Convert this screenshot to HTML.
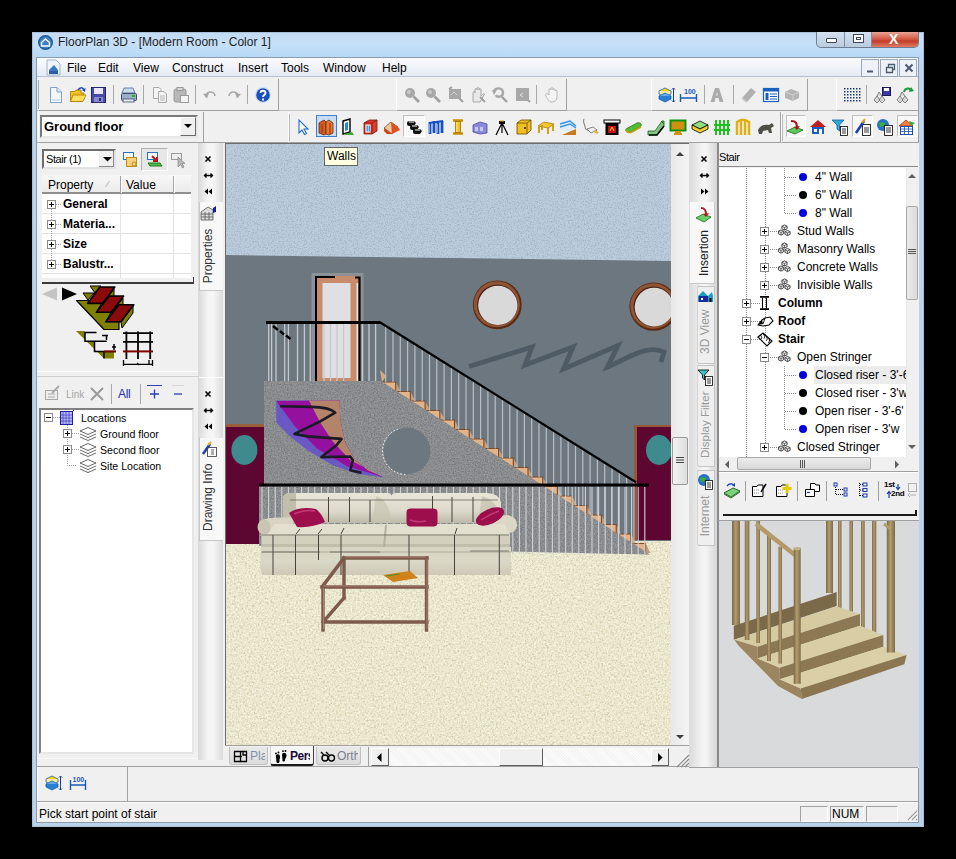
<!DOCTYPE html>
<html><head><meta charset="utf-8">
<style>
*{margin:0;padding:0;box-sizing:border-box}
body{width:956px;height:859px;background:#000;position:relative;overflow:hidden;font-family:"Liberation Sans",sans-serif;font-size:12px;color:#000}
.a{position:absolute}
.t{position:absolute;white-space:nowrap;line-height:14px}
svg{position:absolute;overflow:visible}
</style></head><body>

<!-- WINDOW FRAME -->
<div class="a" style="left:32px;top:32px;width:892px;height:795px;background:linear-gradient(180deg,#c2daf2 0px,#c6e0f8 12px,#b8d8f6 25px,#bcd6f0 40px,#bad2ec 100%);box-shadow:inset 0 0 0 1px #a9c0d8"></div>
<!-- title icon -->
<svg style="left:37px;top:34px" width="17" height="17" viewBox="0 0 17 17"><circle cx="8.5" cy="8.5" r="7.5" fill="#1f5d9a"/><circle cx="8.5" cy="8.5" r="6" fill="#3b7fc2"/><path d="M4.5 8.5 L8.5 5 L12.5 8.5 V12 H4.5Z" fill="none" stroke="#fff" stroke-width="1.4"/></svg>
<div class="t" style="left:58px;top:35px;font-size:12px;color:#1e1e1e">FloorPlan 3D - [Modern Room - Color 1]</div>
<!-- caption buttons -->
<div class="a" style="left:816px;top:32px;width:103px;height:16px;border:1px solid #6d7f95;border-top:none;border-radius:0 0 5px 5px;overflow:hidden;background:linear-gradient(#d4e0ee,#bccbdd)">
  <div class="a" style="left:0;top:0;width:28px;height:15px;border-right:1px solid #7b8ea5"></div>
  <div class="a" style="left:28px;top:0;width:27px;height:15px;border-right:1px solid #7b8ea5"></div>
  <div class="a" style="left:55px;top:0;width:48px;height:15px;background:linear-gradient(#e9a594,#d2533f 50%,#c23c27 60%,#e07c64)"></div>
  <div class="a" style="left:9px;top:6px;width:11px;height:5px;border:1px solid #3a4a5e;background:#fff;border-radius:1px"></div>
  <div class="a" style="left:36px;top:2px;width:11px;height:9px;border:1px solid #3a4a5e;background:#fff"><div class="a" style="left:2px;top:2px;width:5px;height:3px;border:1px solid #3a4a5e"></div></div>
  <div class="t" style="left:72px;top:0px;font-size:14px;font-weight:bold;color:#fff;line-height:14px">X</div>
</div>

<!-- CLIENT AREA -->
<div class="a" style="left:36px;top:57px;width:883px;height:766px;background:#f0f0f0;border:1px solid #8d9aaa"></div>

<!-- MENU BAR -->
<div class="a" style="left:37px;top:58px;width:881px;height:19px;background:linear-gradient(#fbfcfe,#e6eaf4);border-bottom:1px solid #b9c0cf"></div>
<svg style="left:46px;top:59px" width="16" height="17" viewBox="0 0 16 17"><path d="M1 1H10L14 5V16H1Z" fill="#eef4fb" stroke="#9fb4cc"/><path d="M3 11L8 6L12 11V15H3Z" fill="#3a78c4"/><rect x="3" y="12" width="9" height="3" fill="#2a5fa5"/></svg>
<div class="t" style="left:67px;top:61px">File</div>
<div class="t" style="left:98px;top:61px">Edit</div>
<div class="t" style="left:133px;top:61px">View</div>
<div class="t" style="left:172px;top:61px">Construct</div>
<div class="t" style="left:238px;top:61px">Insert</div>
<div class="t" style="left:281px;top:61px">Tools</div>
<div class="t" style="left:323px;top:61px">Window</div>
<div class="t" style="left:382px;top:61px">Help</div>
<!-- MDI buttons -->
<div class="a" style="left:861px;top:59px;width:18px;height:18px;border:1px solid #9aa7b8;background:#eef1f7"></div>
<div class="a" style="left:880px;top:59px;width:18px;height:18px;border:1px solid #9aa7b8;background:#eef1f7"></div>
<div class="a" style="left:899px;top:59px;width:18px;height:18px;border:1px solid #9aa7b8;background:#eef1f7"></div>
<svg style="left:861px;top:59px" width="57" height="18"><path d="M6 12.5 H12" stroke="#4a5a70" stroke-width="2"/><path d="M25.5 8.5 H31.5 V13.5 H25.5Z M27.5 8 V5.5 H33.5 V10.5 H32" fill="none" stroke="#4a5a70" stroke-width="1.3"/><path d="M44.5 5.5 L51.5 12.5 M51.5 5.5 L44.5 12.5" stroke="#4a5a70" stroke-width="2"/></svg>

<!-- TOOLBAR ROW 1 BG -->
<div class="a" style="left:37px;top:78px;width:881px;height:33px;background:#f0f0f0;border-bottom:1px solid #c8c8c8"></div>
<!-- ROW 2 BG -->
<div class="a" style="left:37px;top:111px;width:881px;height:32px;background:#f0f0f0;border-bottom:1px solid #a0a0a0"></div>

<!--TB-->
<div class="a" style="left:38px;top:79px;width:241px;height:32px;border-left:1px solid #fff;border-right:1px solid #a0a0a0;border-bottom:1px solid #a0a0a0"></div>
<div class="a" style="left:396px;top:79px;width:171px;height:32px;border-left:1px solid #fff;border-right:1px solid #a0a0a0;border-bottom:1px solid #a0a0a0"></div>
<div class="a" style="left:651px;top:79px;width:157px;height:32px;border-left:1px solid #fff;border-right:1px solid #a0a0a0;border-bottom:1px solid #a0a0a0"></div>
<div class="a" style="left:836px;top:79px;width:83px;height:32px;border-left:1px solid #fff;border-right:1px solid #a0a0a0;border-bottom:1px solid #a0a0a0"></div>
<div class="a" style="left:38px;top:80px;width:1px;height:29px;background:#a8a8a8"></div>
<svg style="left:47.0px;top:85.5px" width="18" height="18" viewBox="0 0 18 18"><path d="M3.5 1.5 H10 L14.5 6 V16.5 H3.5Z" fill="#f4f8fc" stroke="#7aa0cc"/><path d="M10 1.5 V6 H14.5" fill="#dfe9f5" stroke="#7aa0cc"/><path d="M5 14 H13" stroke="#b8cce6"/></svg>
<svg style="left:68.5px;top:85.5px" width="18" height="18" viewBox="0 0 18 18"><path d="M1.5 5.5 H6 L7 4 H12 V7 H15 L13 15.5 H1.5Z" fill="#f0c020" stroke="#a87a00" stroke-width="0.8"/><path d="M4 9 H17 L14 15.5 H1.5Z" fill="#ffe060" stroke="#a87a00" stroke-width="0.8"/><path d="M9 4 C11 1 14 1 15 4" stroke="#1a4ab8" stroke-width="1.5" fill="none"/><path d="M13 4 L16 6 L16.5 2Z" fill="#1a4ab8"/></svg>
<svg style="left:90.0px;top:85.5px" width="18" height="18" viewBox="0 0 18 18"><rect x="1.5" y="1.5" width="14" height="15" fill="#4a4aa8" stroke="#26266a"/><rect x="4" y="2" width="9" height="6" fill="#e8e8f8"/><rect x="4" y="11" width="9" height="5" fill="#8a8ad0"/><rect x="9" y="12" width="2" height="3" fill="#26266a"/></svg>
<div class="a" style="left:113px;top:85px;width:1px;height:19px;background:#a8a8a8"></div>
<svg style="left:119.5px;top:85.5px" width="18" height="18" viewBox="0 0 18 18"><path d="M4 2 H13 L15 7 H2Z" fill="#c8dcf0" stroke="#4a6a90" stroke-width="0.8"/><rect x="1.5" y="7.5" width="15" height="7" rx="1" fill="#9ab0c8" stroke="#3a4a6a"/><rect x="3" y="13" width="11" height="3" fill="#e8eef4" stroke="#3a4a6a" stroke-width="0.8"/><rect x="12" y="9" width="3" height="2" fill="#2ab02a"/></svg>
<div class="a" style="left:143px;top:85px;width:1px;height:19px;background:#a8a8a8"></div>
<svg style="left:150.5px;top:85.5px" width="18" height="18" viewBox="0 0 18 18"><path d="M2.5 1.5 H8 L10 3.5 V12.5 H2.5Z" fill="#f4f4f4" stroke="#a8a8a8"/><path d="M7.5 5.5 H13 L15.5 8 V16.5 H7.5Z" fill="#f4f4f4" stroke="#a8a8a8"/><path d="M9 10H14M9 12H14M9 14H14" stroke="#b8b8b8"/></svg>
<svg style="left:172.0px;top:85.5px" width="18" height="18" viewBox="0 0 18 18"><rect x="2" y="3" width="12" height="13" rx="2" fill="#b8b8b8" stroke="#9a9a9a"/><rect x="5" y="1.5" width="6" height="3" fill="#d8d8d8" stroke="#9a9a9a"/><rect x="8.5" y="9.5" width="8" height="7" fill="#f4f4f4" stroke="#9a9a9a"/></svg>
<div class="a" style="left:195px;top:85px;width:1px;height:19px;background:#a8a8a8"></div>
<svg style="left:202.0px;top:85.5px" width="18" height="18" viewBox="0 0 18 18"><path d="M4 11 C3 5 13 4 13 10" stroke="#a8a8a8" stroke-width="1.6" fill="none"/><path d="M1 8 L5 12.5 L7 7Z" fill="#a8a8a8"/></svg>
<svg style="left:224.0px;top:85.5px" width="18" height="18" viewBox="0 0 18 18"><path d="M14 11 C15 5 5 4 5 10" stroke="#a8a8a8" stroke-width="1.6" fill="none"/><path d="M17 8 L13 12.5 L11 7Z" fill="#a8a8a8"/></svg>
<div class="a" style="left:247px;top:85px;width:1px;height:19px;background:#a8a8a8"></div>
<svg style="left:254.0px;top:85.5px" width="18" height="18" viewBox="0 0 18 18"><circle cx="9" cy="9" r="8" fill="#cfe0f8"/><circle cx="9" cy="9" r="6.8" fill="#1a50c0"/><path d="M6.5 7 C6.5 4 11.5 4 11.5 7 C11.5 9 9 9 9 11" stroke="#fff" stroke-width="1.8" fill="none"/><rect x="8" y="12.5" width="2" height="2" fill="#fff"/></svg>
<svg style="left:402.7px;top:85.5px" width="18" height="18" viewBox="0 0 18 18"><circle cx="7" cy="7" r="5" fill="#a8a8a8"/><path d="M10.5 10.5 L16 16" stroke="#a0a0a0" stroke-width="2.6"/><circle cx="6" cy="6" r="2" fill="#c8c8c8"/></svg>
<svg style="left:424.3px;top:85.5px" width="18" height="18" viewBox="0 0 18 18"><circle cx="7" cy="7" r="5" fill="#a8a8a8"/><path d="M10.5 10.5 L16 16" stroke="#a0a0a0" stroke-width="2.6"/><circle cx="6" cy="6" r="2" fill="#c8c8c8"/></svg>
<svg style="left:446.6px;top:85.5px" width="18" height="18" viewBox="0 0 18 18"><rect x="2" y="3" width="12" height="10" fill="#a8a8a8"/><path d="M2 3 L5 1 M12 12 L16 16" stroke="#a0a0a0" stroke-width="2"/><path d="M4 9 L7 6 L10 9" stroke="#d0d0d0" fill="none"/></svg>
<svg style="left:468.5px;top:85.5px" width="18" height="18" viewBox="0 0 18 18"><path d="M4 16 V7 C4 5 6 5 6 7 V4 C6 2 8 2 8 4 V3 C8 1 10 1 10 3 V4 C10 2 12 2 12 4 V10 L14 8 C15 7 16 8 15 9 L11 16Z" fill="#e8e8e8" stroke="#a8a8a8"/><path d="M11 11 L16 16" stroke="#a0a0a0" stroke-width="2"/></svg>
<svg style="left:491.0px;top:85.5px" width="18" height="18" viewBox="0 0 18 18"><path d="M3 6 C3 1 12 1 12 7 C12 11 6 12 5 9" stroke="#a8a8a8" stroke-width="2.4" fill="none"/><path d="M1 4 L6 4 L3 9Z" fill="#a8a8a8"/><path d="M11 11 L16 16" stroke="#a0a0a0" stroke-width="2.4"/></svg>
<svg style="left:513.7px;top:85.5px" width="18" height="18" viewBox="0 0 18 18"><rect x="2" y="2" width="13" height="13" fill="#a8a8a8"/><path d="M9 7 L6 9 L9 11" stroke="#e0e0e0" fill="none"/><path d="M14 14 L16 16" stroke="#a0a0a0" stroke-width="2"/></svg>
<div class="a" style="left:536px;top:85px;width:1px;height:19px;background:#a8a8a8"></div>
<svg style="left:543.0px;top:85.5px" width="18" height="18" viewBox="0 0 18 18"><path d="M3 10 C2 7 4 7 5 8 L6 9 V4 C6 2 8 2 8 4 V3 C8 1 10 1 10 3 V4 C10 2 12 2 12 4 V5 C12 4 14 4 14 5 V11 C14 14 12 16 9 16 C6 16 5 14 3 10Z" fill="#f4f4f4" stroke="#b8b8b8"/></svg>
<svg style="left:657.0px;top:85.5px" width="19" height="18" viewBox="0 0 19 18"><path d="M2 5 L8 2 L14 5 L8 8Z" fill="#f8d800" stroke="#1a5ab8" stroke-width="0.8"/><path d="M2 5 V8 L8 11 L14 8 V5" fill="#ffe8a0" stroke="#1a5ab8" stroke-width="0.8"/><path d="M2 10 L8 7 L14 10 L8 13Z" fill="#60b0f0" stroke="#1a5ab8" stroke-width="0.8"/><path d="M2 10 V13 L8 16 L14 13 V10" fill="#2a80d0" stroke="#1a5ab8" stroke-width="0.8"/><path d="M16.5 2 V16 M15 3.5 L16.5 2 L18 3.5 M15 14.5 L16.5 16 L18 14.5" stroke="#1a3a90" fill="none"/></svg>
<svg style="left:679.3px;top:85.5px" width="19" height="18" viewBox="0 0 19 18"><path d="M1.5 8 V16 M17.5 8 V16 M1.5 12 H17.5" stroke="#1a5ab8" stroke-width="1.4"/><text x="5" y="8" font-size="7" font-weight="bold" fill="#1a5ab8" font-family="Liberation Sans">100</text></svg>
<div class="a" style="left:704px;top:85px;width:1px;height:19px;background:#a8a8a8"></div>
<svg style="left:708.0px;top:85.5px" width="18" height="18" viewBox="0 0 18 18"><path d="M2.5 16 L7 2 H11 L15.5 16 H11.5 L10.5 12 H7.5 L6.5 16Z M8.2 9.5 H9.8 L9 6Z" fill="#ababab" fill-rule="evenodd"/></svg>
<div class="a" style="left:733px;top:85px;width:1px;height:19px;background:#a8a8a8"></div>
<svg style="left:739.5px;top:85.5px" width="18" height="18" viewBox="0 0 18 18"><path d="M2 12 L11 2 L16 6 L7 16Z" fill="#b0b0b0"/><path d="M2 12 L7 16" stroke="#c8c8c8" stroke-width="2"/></svg>
<svg style="left:762.4px;top:85.5px" width="18" height="18" viewBox="0 0 18 18"><rect x="1.5" y="2.5" width="15" height="13" fill="#fff" stroke="#1a60c0" stroke-width="1.2"/><rect x="1.5" y="2.5" width="15" height="3" fill="#1a60c0"/><rect x="3.5" y="7" width="3" height="7" fill="#1a60c0"/><path d="M8 8H15M8 10.5H15M8 13H15" stroke="#1a60c0" stroke-width="1.2"/></svg>
<svg style="left:783.0px;top:85.5px" width="18" height="18" viewBox="0 0 18 18"><path d="M2 6 L8 3 L16 6 L16 12 L10 15 L2 12Z" fill="#b4b4b4"/><path d="M2 6 L10 9 L16 6 M10 9 V15" stroke="#d0d0d0" fill="none"/></svg>
<svg style="left:842.5px;top:85.5px" width="18" height="18" viewBox="0 0 18 18"><rect x="1" y="2" width="1.5" height="1.5" fill="#1a3a80"/><rect x="1" y="5" width="1.5" height="1.5" fill="#1a3a80"/><rect x="1" y="8" width="1.5" height="1.5" fill="#1a3a80"/><rect x="1" y="11" width="1.5" height="1.5" fill="#1a3a80"/><rect x="1" y="14" width="1.5" height="1.5" fill="#1a3a80"/><rect x="4" y="2" width="1.5" height="1.5" fill="#1a3a80"/><rect x="4" y="5" width="1.5" height="1.5" fill="#1a3a80"/><rect x="4" y="8" width="1.5" height="1.5" fill="#1a3a80"/><rect x="4" y="11" width="1.5" height="1.5" fill="#1a3a80"/><rect x="4" y="14" width="1.5" height="1.5" fill="#1a3a80"/><rect x="7" y="2" width="1.5" height="1.5" fill="#1a3a80"/><rect x="7" y="5" width="1.5" height="1.5" fill="#1a3a80"/><rect x="7" y="8" width="1.5" height="1.5" fill="#1a3a80"/><rect x="7" y="11" width="1.5" height="1.5" fill="#1a3a80"/><rect x="7" y="14" width="1.5" height="1.5" fill="#1a3a80"/><rect x="10" y="2" width="1.5" height="1.5" fill="#1a3a80"/><rect x="10" y="5" width="1.5" height="1.5" fill="#1a3a80"/><rect x="10" y="8" width="1.5" height="1.5" fill="#1a3a80"/><rect x="10" y="11" width="1.5" height="1.5" fill="#1a3a80"/><rect x="10" y="14" width="1.5" height="1.5" fill="#1a3a80"/><rect x="13" y="2" width="1.5" height="1.5" fill="#1a3a80"/><rect x="13" y="5" width="1.5" height="1.5" fill="#1a3a80"/><rect x="13" y="8" width="1.5" height="1.5" fill="#1a3a80"/><rect x="13" y="11" width="1.5" height="1.5" fill="#1a3a80"/><rect x="13" y="14" width="1.5" height="1.5" fill="#1a3a80"/><rect x="16" y="2" width="1.5" height="1.5" fill="#1a3a80"/><rect x="16" y="5" width="1.5" height="1.5" fill="#1a3a80"/><rect x="16" y="8" width="1.5" height="1.5" fill="#1a3a80"/><rect x="16" y="11" width="1.5" height="1.5" fill="#1a3a80"/><rect x="16" y="14" width="1.5" height="1.5" fill="#1a3a80"/></svg>
<div class="a" style="left:866px;top:85px;width:1px;height:19px;background:#a8a8a8"></div>
<svg style="left:872.8px;top:85.5px" width="19" height="18" viewBox="0 0 19 18"><path d="M1 14 L4 10 L7 14 L4 17Z M6 14 L9 10 L12 14 L9 17Z" fill="#d8d8d8" stroke="#6a6a6a" stroke-width="0.8"/><path d="M4 10 L6 6 L9 10" fill="#d8d8d8" stroke="#6a6a6a" stroke-width="0.8"/><rect x="9.5" y="1.5" width="8" height="8" fill="#3a3aa8" stroke="#1a1a5a"/><rect x="11" y="2" width="5" height="3" fill="#fff"/></svg>
<svg style="left:895.5px;top:85.5px" width="19" height="18" viewBox="0 0 19 18"><path d="M1 14 L4 10 L7 14 L4 17Z M6 14 L9 10 L12 14 L9 17Z" fill="#d8d8d8" stroke="#6a6a6a" stroke-width="0.8"/><path d="M4 10 L6 6 L9 10" fill="#d8d8d8" stroke="#6a6a6a" stroke-width="0.8"/><path d="M8 6 C9 2 14 1 15 5" stroke="#1a9a3a" stroke-width="2" fill="none"/><path d="M13 6 L18 5 L15 1Z" fill="#1a9a3a"/></svg>
<div class="a" style="left:38px;top:112px;width:166px;height:31px;border-left:1px solid #fff;border-right:1px solid #a0a0a0;border-bottom:1px solid #a0a0a0"></div>
<div class="a" style="left:288px;top:112px;width:493px;height:31px;border-left:1px solid #fff;border-right:1px solid #a0a0a0;border-bottom:1px solid #a0a0a0"></div>
<div class="a" style="left:781px;top:112px;width:138px;height:31px;border-left:1px solid #fff;border-right:1px solid #a0a0a0;border-bottom:1px solid #a0a0a0"></div>
<div class="a" style="left:316px;top:115px;width:21px;height:22px;background:#c8dcf2;border:1px solid #3d7fd0"></div>
<div class="a" style="left:403px;top:115px;width:22px;height:22px;background:#f8f8f8;border:1px solid;border-color:#c0c0c0 #fff #fff #c0c0c0"></div>
<div class="a" style="left:786px;top:115px;width:20px;height:22px;background:#f8f8f8;border:1px solid;border-color:#c0c0c0 #fff #fff #c0c0c0"></div>
<div class="a" style="left:897px;top:115px;width:21px;height:22px;background:#f8f8f8;border:1px solid;border-color:#c0c0c0 #fff #fff #c0c0c0"></div>
<div class="a" style="left:852px;top:115px;width:21px;height:22px;background:#f8f8f8;border:1px solid;border-color:#c0c0c0 #fff #fff #c0c0c0"></div>
<div class="a" style="left:289px;top:114px;width:1px;height:27px;background:#b8b8b8"></div>
<svg style="left:294.4px;top:117.5px" width="18" height="18" viewBox="0 0 18 18"><path d="M5 2 V15 L8 12 L10.5 16.5 L12.5 15.5 L10 11 L14 11Z" fill="#fff" stroke="#1a70d0" stroke-width="1.1"/></svg>
<svg style="left:317.0px;top:117.5px" width="18" height="18" viewBox="0 0 18 18"><path d="M2 5 L7 2 L9 4 L9 16 L7 17 L2 15Z" fill="#d85a20" stroke="#6a2a10" stroke-width="0.8"/><path d="M9 4 L12 2 L16 5 V15 L12 17 L9 16Z" fill="#e87a30" stroke="#6a2a10" stroke-width="0.8"/><path d="M5 6 V15 M13 5 V16" stroke="#a03a10" stroke-width="1.2"/></svg>
<svg style="left:339.0px;top:117.5px" width="18" height="18" viewBox="0 0 18 18"><path d="M4 3 L11 1 V14 L4 16Z" fill="#fff" stroke="#000" stroke-width="1.4"/><path d="M6 5 L9 4 V12 L6 13Z" fill="#1a90d0"/><path d="M5 16 L13 14 L15 17 L7 17Z" fill="#30b030"/></svg>
<svg style="left:361.0px;top:117.5px" width="18" height="18" viewBox="0 0 18 18"><path d="M3 5 L8 2 H16 V13 L11 16 H3Z" fill="#e03a2a" stroke="#7a1a10" stroke-width="0.8"/><path d="M3 5 H11 V16 M11 5 L16 2" stroke="#7a1a10" fill="none" stroke-width="0.8"/><rect x="4.5" y="6.5" width="5" height="8" fill="#fff"/><rect x="5.5" y="7.5" width="1.5" height="6" fill="#3aa0e0"/><rect x="7.5" y="7.5" width="1.5" height="6" fill="#3aa0e0"/></svg>
<svg style="left:383.0px;top:117.5px" width="18" height="18" viewBox="0 0 18 18"><path d="M1 10 L8 4 L15 9 L9 16Z" fill="#e8c8a0" stroke="#8a4a20" stroke-width="0.8"/><path d="M1 10 L9 16 L4 16 L1 13Z" fill="#d04010"/><path d="M8 4 L15 9 L17 12 L9 16" fill="#e05020"/></svg>
<svg style="left:405.0px;top:117.5px" width="18" height="18" viewBox="0 0 18 18"><path d="M2 5 Q2 3 5 3 H9 L11 5 L9 8 H4 Q2 8 2 6Z" fill="#111"/><path d="M4 4 H9" stroke="#fff" stroke-width="1"/><path d="M5 9 Q5 7 8 7 H12 L14 9 L12 12 H7 Q5 12 5 10Z" fill="#111"/><path d="M7 8 H12" stroke="#fff" stroke-width="1"/><path d="M8 13 Q8 11 11 11 H15 L17 13 L15 16 H10 Q8 16 8 14Z" fill="#111"/><path d="M10 12 H15" stroke="#fff" stroke-width="1"/></svg>
<svg style="left:427.0px;top:117.5px" width="18" height="18" viewBox="0 0 18 18"><path d="M3 4 V16 M7 3 V15 M11 4 V16 M15 3 V15" stroke="#1a50c0" stroke-width="2.8" fill="none"/><path d="M2 5 L16 3" stroke="#1a50c0" stroke-width="2.2"/><path d="M2.5 6 V15 M10.5 6 V15" stroke="#7ab0f0" stroke-width="0.8"/></svg>
<svg style="left:449.0px;top:117.5px" width="18" height="18" viewBox="0 0 18 18"><path d="M4 2.5 H14 M4 15.5 H14" stroke="#c89000" stroke-width="2.6"/><rect x="6.5" y="3.5" width="5" height="11" fill="#f0c020" stroke="#a07000" stroke-width="0.8"/><path d="M8 4 V14" stroke="#fff0a0" stroke-width="1"/></svg>
<svg style="left:471.0px;top:117.5px" width="18" height="18" viewBox="0 0 18 18"><path d="M2 7 L9 4 L16 6 V15 L9 16 L2 14Z" fill="#8a8ad8" stroke="#4a4aa0" stroke-width="0.8"/><rect x="4" y="9" width="3" height="4" fill="#c8c8f8"/><rect x="9" y="9" width="3" height="4" fill="#c8c8f8"/></svg>
<svg style="left:493.0px;top:117.5px" width="18" height="18" viewBox="0 0 18 18"><path d="M9 5 L3 17 M9 5 L15 17 M9 5 V15" stroke="#000" stroke-width="1.2"/><path d="M6 3 H12 V6 H6Z" fill="#000"/><path d="M7 3 L11 3" stroke="#d0a020" stroke-width="1"/></svg>
<svg style="left:515.0px;top:117.5px" width="18" height="18" viewBox="0 0 18 18"><path d="M2 5 L6 2 H16 V12 L12 16 H2Z" fill="#f0c020" stroke="#6a4a00" stroke-width="0.8"/><path d="M2 5 H12 V16 M12 5 L16 2" stroke="#6a4a00" fill="none" stroke-width="0.8"/><rect x="9" y="9" width="2" height="2" fill="#6a4a00"/></svg>
<svg style="left:537.0px;top:117.5px" width="18" height="18" viewBox="0 0 18 18"><path d="M1 8 L7 4 L17 6 L11 10Z" fill="#f8c830" stroke="#a87800" stroke-width="0.8"/><path d="M2 9 V15 M11 10 V16 M16 7 V13 M5 7 V12" stroke="#d09800" stroke-width="1.8"/></svg>
<svg style="left:559.0px;top:117.5px" width="18" height="18" viewBox="0 0 18 18"><path d="M1 12 V4 L11 1 L17 6 V14 Z" fill="#dfeefa"/><path d="M1 6 L11 3 L17 8 M1 9 L11 6 L17 10" stroke="#3a90e0" stroke-width="1.4" fill="none"/><path d="M3 17 L17 11 V17Z" fill="#c87820"/></svg>
<svg style="left:581.0px;top:117.5px" width="18" height="18" viewBox="0 0 18 18"><path d="M3 1 C1 4 4 6 4 9 C4 12 8 13 10 12" stroke="#8a8a8a" stroke-width="1.2" fill="none"/><path d="M6 11 L12 9 L16 12 L10 15Z" fill="#f0f0f0" stroke="#6a6a6a" stroke-width="0.8"/><path d="M13 13 L17 15" stroke="#e0b040" stroke-width="2"/></svg>
<svg style="left:603.0px;top:117.5px" width="18" height="18" viewBox="0 0 18 18"><rect x="1" y="2" width="16" height="3" fill="#fff" stroke="#000"/><rect x="2.5" y="5" width="13" height="12" fill="#000"/><rect x="5" y="8" width="8" height="7" fill="#c01010"/><path d="M7 13 L9 9 L11 13" stroke="#f8c020" fill="none"/></svg>
<svg style="left:625.0px;top:117.5px" width="18" height="18" viewBox="0 0 18 18"><path d="M1 11 L12 5 C15 4 17 6 16 8 L6 14 C3 15 0 14 1 11Z" fill="#50c030" stroke="#2a7010" stroke-width="0.8"/><path d="M1 12 C2 15 5 15 7 14 L16 9" stroke="#c8a020" stroke-width="1.5" fill="none"/></svg>
<svg style="left:647.0px;top:117.5px" width="18" height="18" viewBox="0 0 18 18"><path d="M1 13 L8 13 L15 3 H17 V8 L10 17 H1Z" fill="#80c880" stroke="#206020" stroke-width="0.8"/><path d="M2 17 L10 17 L17 8" stroke="#000" stroke-width="1.6" fill="none"/><path d="M14 3 L17 6" stroke="#206020"/></svg>
<svg style="left:669.0px;top:117.5px" width="18" height="18" viewBox="0 0 18 18"><rect x="1.5" y="2.5" width="15" height="10" fill="#d09010" stroke="#109010" stroke-width="2"/><rect x="6" y="13" width="6" height="2" fill="#d09010"/><rect x="5" y="15" width="8" height="2" fill="#d09010"/></svg>
<svg style="left:691.0px;top:117.5px" width="18" height="18" viewBox="0 0 18 18"><path d="M1 7 L9 3 L17 7 L9 11Z" fill="#90e080" stroke="#000" stroke-width="0.8"/><path d="M1 7 V11 L9 15 L17 11 V7 L9 11Z" fill="#f0d030" stroke="#000" stroke-width="0.8"/></svg>
<svg style="left:713.0px;top:117.5px" width="18" height="18" viewBox="0 0 18 18"><path d="M3 2 V17 M7 2 V17 M11 2 V17 M15 2 V17 M1 7 H17 M1 12 H17" stroke="#20c020" stroke-width="2"/></svg>
<svg style="left:735.0px;top:117.5px" width="18" height="18" viewBox="0 0 18 18"><path d="M2 3 V17 M6 2 V17 M10 2 V17 M14 3 V17 M2 4 C6 1 10 1 14 4" stroke="#e0b010" stroke-width="2.4" fill="none"/></svg>
<svg style="left:757.0px;top:117.5px" width="18" height="18" viewBox="0 0 18 18"><path d="M1 12 C3 7 8 6 12 7 L15 5 L17 8 L14 10 L15 15 H12 L11 12 L6 13 L5 16 H2Z" fill="#505048"/></svg>
<div class="a" style="left:782px;top:114px;width:1px;height:27px;background:#b8b8b8"></div>
<svg style="left:786.0px;top:117.5px" width="18" height="18" viewBox="0 0 18 18"><path d="M1 13 L9 9 L17 12 L9 16Z" fill="#60c860" stroke="#1a6a1a" stroke-width="0.8"/><path d="M5 3 C10 3 11 5 11 10" stroke="#b01010" stroke-width="2.2" fill="none"/><path d="M8 9 L11 12 L14 8Z" fill="#b01010"/></svg>
<svg style="left:809.0px;top:117.5px" width="18" height="18" viewBox="0 0 18 18"><path d="M1 9 L9 2 L17 9 Z" fill="#c02020"/><rect x="3" y="9" width="12" height="7" fill="#1a60c0"/><rect x="5" y="11" width="3" height="3" fill="#fff"/><rect x="10" y="11" width="3" height="5" fill="#fff"/></svg>
<svg style="left:831.0px;top:117.5px" width="18" height="18" viewBox="0 0 18 18"><path d="M1 2 H13 L8.5 7 V13 L6 11 V7Z" fill="#30a8e0" stroke="#1a5a90" stroke-width="0.8"/><rect x="9.5" y="8.5" width="7" height="9" fill="#fff" stroke="#000" stroke-width="0.8"/><path d="M11 11H15M11 13H15M11 15H15" stroke="#000" stroke-width="0.8"/></svg>
<svg style="left:853.7px;top:117.5px" width="18" height="18" viewBox="0 0 18 18"><rect x="8.5" y="6.5" width="8" height="11" fill="#fff" stroke="#000" stroke-width="0.8"/><path d="M10 10H15M10 12H15M10 14H15" stroke="#000" stroke-width="0.8"/><path d="M2 15 L10 3" stroke="#1a40b0" stroke-width="2.6"/><path d="M8 5 L11 1" stroke="#e0a020" stroke-width="2"/></svg>
<svg style="left:876.0px;top:117.5px" width="18" height="18" viewBox="0 0 18 18"><circle cx="7" cy="7" r="6" fill="#2a70c8"/><path d="M3 5 C5 3 7 6 9 4 C10 7 6 9 4 9Z" fill="#3ab03a"/><rect x="8.5" y="7.5" width="8" height="10" fill="#fff" stroke="#000" stroke-width="0.8"/><path d="M10 10H15M10 12H15M10 14H15" stroke="#000" stroke-width="0.8"/></svg>
<svg style="left:897.5px;top:117.5px" width="18" height="18" viewBox="0 0 18 18"><path d="M1 8 L8 2 L15 8Z" fill="#f08040" stroke="#a03010" stroke-width="0.8"/><rect x="2.5" y="8.5" width="12" height="8" fill="#fff" stroke="#1a50b0"/><path d="M2.5 11 H14.5 M2.5 13.5 H14.5 M6.5 8.5 V16.5 M10.5 8.5 V16.5" stroke="#1a50b0" stroke-width="0.8"/><path d="M11 3 L17 5 L13 8" fill="#30b040"/></svg>
<!--/TB-->
<!-- combo ground floor -->
<div class="a" style="left:40px;top:115px;width:158px;height:23px;background:#fff;border:2px solid;border-color:#7a7a7a #e8e8e8 #e8e8e8 #7a7a7a"></div>
<div class="t" style="left:44px;top:119px;font-size:13px;font-weight:bold;line-height:16px">Ground floor</div>
<div class="a" style="left:180px;top:117px;width:16px;height:19px;background:#f0f0f0;border:1px solid;border-color:#fff #6b6b6b #6b6b6b #fff"></div>
<svg style="left:184px;top:124px" width="8" height="5"><path d="M0 0H8L4 4Z" fill="#000"/></svg>

<!-- LEFT PANEL -->
<div class="a" style="left:37px;top:143px;width:161px;height:617px;background:#f0f0f0"></div>
<!-- stair combo -->
<div class="a" style="left:42px;top:149px;width:74px;height:20px;background:#fff;border:2px solid;border-color:#6d6d6d #e3e3e3 #e3e3e3 #6d6d6d"></div>
<div class="a" style="left:99px;top:151px;width:15px;height:16px;background:#f0f0f0;border-right:1px solid #8a8a8a;border-bottom:1px solid #8a8a8a"></div>
<svg style="left:103px;top:157px" width="9" height="5"><path d="M0 0H9L4.5 4.5Z" fill="#000"/></svg>
<div class="t" style="left:46px;top:152px;font-size:11px;letter-spacing:-0.45px">Stair (1)</div>
<!-- 3 small icons -->
<svg style="left:122px;top:151px" width="17" height="17" viewBox="0 0 17 17"><rect x="1.5" y="1.5" width="10" height="7" fill="#fff" stroke="#2a6fc0"/><rect x="4.5" y="6.5" width="10" height="9" fill="#f6d27a" stroke="#c08a20"/><circle cx="12" cy="13" r="2" fill="none" stroke="#c08a20"/></svg>
<div class="a" style="left:141px;top:148px;width:27px;height:23px;background:#e7e7e7;border:1px solid;border-color:#b0b0b0 #fff #fff #b0b0b0"></div>
<svg style="left:146px;top:151px" width="17" height="17" viewBox="0 0 17 17"><rect x="1.5" y="1.5" width="10" height="7" fill="#fff" stroke="#2a6fc0"/><path d="M2 12 L14 12 L16 15 L4 15Z" fill="#4dbb4d" stroke="#1e7a1e"/><path d="M6 5 L11 10 M11 6 V10 H7" stroke="#b01a1a" stroke-width="2" fill="none"/></svg>
<svg style="left:170px;top:151px" width="17" height="17" viewBox="0 0 17 17"><rect x="1.5" y="2.5" width="10" height="6" fill="#eee" stroke="#9a9a9a"/><path d="M8 6 L8 16 L10.5 13.5 L12.5 17 L14 16 L12 12.5 L15 12.5Z" fill="#b8b8b8" stroke="#8a8a8a" stroke-width="0.8"/></svg>
<!-- property grid -->
<div class="a" style="left:42px;top:175px;width:149px;height:19px;background:linear-gradient(#f7f7f7,#ececec);border-bottom:2px solid #8e8e8e"></div>
<div class="a" style="left:120px;top:176px;width:2px;height:17px;background:#a5a5a5;border-right:1px solid #fff"></div>
<div class="a" style="left:173px;top:176px;width:2px;height:17px;background:#a5a5a5;border-right:1px solid #fff"></div>
<div class="t" style="left:48px;top:178px">Property</div>
<div class="t" style="left:107px;top:177px;font-size:9px;color:#9a9a9a">&#8260;</div>
<div class="t" style="left:126px;top:178px">Value</div>
<div class="a" style="left:42px;top:194px;width:149px;height:84px;background:#fff"></div>
<div class="a" style="left:42px;top:213px;width:149px;height:1px;background:#e3e3e3"></div>
<div class="a" style="left:42px;top:233px;width:149px;height:1px;background:#e3e3e3"></div>
<div class="a" style="left:42px;top:253px;width:149px;height:1px;background:#e3e3e3"></div>
<div class="a" style="left:42px;top:273px;width:149px;height:1px;background:#e3e3e3"></div>
<div class="a" style="left:120px;top:194px;width:1px;height:84px;background:#e3e3e3"></div>
<div class="a" style="left:173px;top:194px;width:1px;height:84px;background:#e3e3e3"></div>
<div class="a" style="left:51px;top:209px;width:0;height:55px;border-left:1px dotted #a0a0a0"></div>
<div class="a" style="left:47px;top:200px;width:9px;height:9px;border:1px solid #8a8a8a;background:#fff"></div>
<div class="a" style="left:47px;top:220px;width:9px;height:9px;border:1px solid #8a8a8a;background:#fff"></div>
<div class="a" style="left:47px;top:240px;width:9px;height:9px;border:1px solid #8a8a8a;background:#fff"></div>
<div class="a" style="left:47px;top:260px;width:9px;height:9px;border:1px solid #8a8a8a;background:#fff"></div>
<svg style="left:47px;top:200px" width="9" height="70"><g stroke="#000" stroke-width="1"><path d="M2 4.5H7M4.5 2V7"/><path d="M2 24.5H7M4.5 22V27"/><path d="M2 44.5H7M4.5 42V47"/><path d="M2 64.5H7M4.5 62V67"/></g></svg>
<svg style="left:56px;top:204px" width="7" height="62"><g stroke="#a0a0a0" stroke-dasharray="1 1"><path d="M0 0.5H6M0 20.5H6M0 40.5H6M0 60.5H6"/></g></svg>
<div class="t" style="left:63px;top:197px;font-weight:bold">General</div>
<div class="t" style="left:63px;top:217px;font-weight:bold">Materia...</div>
<div class="t" style="left:63px;top:237px;font-weight:bold">Size</div>
<div class="t" style="left:63px;top:257px;font-weight:bold">Balustr...</div>
<div class="a" style="left:42px;top:282px;width:152px;height:2px;background:#3c3c3c"></div>
<div class="a" style="left:193px;top:277px;width:1px;height:6px;background:#3c3c3c"></div>
<!-- preview arrows + stair -->
<svg style="left:42px;top:287px" width="36" height="14"><path d="M15 0.5 V13.5 L0 7Z" fill="#c4c4c4"/><path d="M20 0.5 V13.5 L35 7Z" fill="#000"/></svg>
<svg style="left:76px;top:285px" width="60" height="46" viewBox="0 0 60 46">
<path d="M0.5 15.5 H14 L26 18 L20.4 27.2 L35 27.5 L29.9 36.7 H43 V44.5 H28Z" fill="#7f7f00" stroke="#000" stroke-width="1.2" stroke-linejoin="round"/>
<path d="M14 1 H25 L19 8Z M7 8 H18 L12 15Z" fill="#7f7f00" stroke="#000" stroke-width="1"/>
<path d="M27 18.5 L38 4 V11 L29 23Z M36 27.5 L47 13 V20 L38 32Z M45 37 L57 21 V28 L46 43Z" fill="#7f7f00" stroke="#000" stroke-width="1"/>
<path d="M11.6 18.4 L23.8 2 L38.8 2 L26.5 18.4Z" fill="#8b0a0a" stroke="#000" stroke-width="1.6" stroke-linejoin="round"/>
<path d="M20.4 27.2 L33.3 11 L47.6 11 L35.4 27.2Z" fill="#8b0a0a" stroke="#000" stroke-width="1.6" stroke-linejoin="round"/>
<path d="M29.9 36.7 L42.8 19.7 L57.8 19.7 L44.9 36.7Z" fill="#8b0a0a" stroke="#000" stroke-width="1.6" stroke-linejoin="round"/>
</svg>
<svg style="left:76px;top:330px" width="80" height="37" viewBox="0 0 80 37">
<path d="M0 1 H9 V11 H19 V21 H28 V28.5 Z" fill="#7f7f00"/>
<path d="M28 21.5 H38 V28.5 H28Z" fill="#7f7f00"/>
<path d="M9 2.4 H20.5 M9 2 V11.2 H30.7 M18.5 11 V21.4 H40 M28 21 V28.5 M30.5 6 V10 M26 5.5 H32 M38 14 V20 M36 17 H40" stroke="#000" stroke-width="1.5" fill="none"/>
<path d="M28 21.4 H40" stroke="#7a0000" stroke-width="1.8"/>
<path d="M50.4 1.5 V29 M62 1.5 V29 M74.2 1.5 V29 M47 3.1 H77 M47 11.9 H77" stroke="#000" stroke-width="1.8"/>
<path d="M47 21.4 H77" stroke="#7a0000" stroke-width="2"/>
<path d="M47.5 34.3 H77 M47.5 30 V36 M76.5 30 V36 M73 30 V34" stroke="#000" stroke-width="1.3"/>
<path d="M61 33 L63 35" stroke="#000" stroke-width="1.3"/>
</svg>
<!-- split -->
<div class="a" style="left:37px;top:371px;width:161px;height:1px;background:#fff"></div>
<div class="a" style="left:37px;top:376px;width:161px;height:1px;background:#cfcfcf"></div>
<!-- lower toolbar -->
<svg style="left:44px;top:385px" width="17" height="17" viewBox="0 0 17 17"><rect x="1.5" y="5.5" width="12" height="9" fill="#eee" stroke="#a8a8a8"/><path d="M4 9H11M4 12H11" stroke="#a8a8a8"/><path d="M8 8 L15 1" stroke="#a8a8a8" stroke-width="2"/></svg>
<div class="t" style="left:66px;top:388px;font-size:10px;color:#a6a6a6">Link</div>
<svg style="left:90px;top:387px" width="15" height="14"><path d="M1 1 L13 13 M13 1 L1 13" stroke="#9a9a9a" stroke-width="2"/></svg>
<div class="a" style="left:111px;top:384px;width:1px;height:20px;background:#a8a8a8"></div>
<div class="t" style="left:118px;top:387px;font-size:12px;color:#1e2fa8;letter-spacing:-0.3px">All</div>
<div class="a" style="left:140px;top:384px;width:1px;height:20px;background:#a8a8a8"></div>
<svg style="left:146px;top:385px" width="38" height="16"><path d="M1 0.5 H16" stroke="#2a3fb0"/><path d="M4 9 H13 M8.5 4.5 V13.5" stroke="#2a3fb0" stroke-width="1.3"/><path d="M26 0.5 H38" stroke="#d8d8d8"/><path d="M28 9 H36" stroke="#2a3fb0" stroke-width="1.3"/></svg>
<!-- tree -->
<div class="a" style="left:39px;top:408px;width:155px;height:346px;background:#fff;border:2px solid;border-color:#808080 #e6e6e6 #e6e6e6 #808080"></div>
<div class="a" style="left:44px;top:413px;width:9px;height:9px;border:1px solid #8a8a8a;background:#fff"></div>
<svg style="left:44px;top:413px" width="9" height="9"><path d="M2 4.5H7" stroke="#000"/></svg>
<svg style="left:53px;top:417px" width="8" height="2"><path d="M0 0.5H8" stroke="#a0a0a0" stroke-dasharray="1 1"/></svg>
<svg style="left:59px;top:410px" width="16" height="16" viewBox="0 0 16 16"><rect x="1.5" y="1.5" width="12" height="13" fill="#b8b8ff" stroke="#1a1a9a"/><path d="M4 1V15M7 1V15M10 1V15M1 5H14M1 8H14M1 11H14" stroke="#3a3ab8" stroke-width="0.7"/><path d="M14 1 L15 0" stroke="#000"/></svg>
<div class="t" style="left:81px;top:411px;font-size:10.6px">Locations</div>
<svg style="left:67px;top:425px" width="10" height="50"><path d="M0.5 0 V40.5 H10" stroke="#a0a0a0" stroke-dasharray="1 1" fill="none"/></svg>
<div class="a" style="left:63px;top:429px;width:9px;height:9px;border:1px solid #8a8a8a;background:#fff"></div>
<div class="a" style="left:63px;top:445px;width:9px;height:9px;border:1px solid #8a8a8a;background:#fff"></div>
<svg style="left:63px;top:429px" width="9" height="25"><g stroke="#000"><path d="M2 4.5H7M4.5 2V7M2 20.5H7M4.5 18V23"/></g></svg>
<svg style="left:72px;top:433px" width="8" height="18"><path d="M0 0.5H8M0 16.5H8" stroke="#a0a0a0" stroke-dasharray="1 1"/></svg>
<svg style="left:79px;top:426px" width="18" height="50" viewBox="0 0 18 50"><g fill="#fff" stroke="#555" stroke-width="0.9"><path d="M1 5 L9 1.5 L17 5 L9 8.5Z"/><path d="M1 8 L9 11.5 L17 8" fill="none"/><path d="M1 11 L9 14.5 L17 11" fill="none"/><path d="M1 21 L9 17.5 L17 21 L9 24.5Z"/><path d="M1 24 L9 27.5 L17 24" fill="none"/><path d="M1 27 L9 30.5 L17 27" fill="none"/><path d="M1 37 L9 33.5 L17 37 L9 40.5Z"/><path d="M1 40 L9 43.5 L17 40" fill="none"/><path d="M1 43 L9 46.5 L17 43" fill="none"/></g></svg>
<div class="t" style="left:100px;top:427px;font-size:10.6px">Ground floor</div>
<div class="t" style="left:100px;top:443px;font-size:10.6px">Second floor</div>
<div class="t" style="left:100px;top:459px;font-size:10.6px">Site Location</div>

<!-- left vertical tab strip -->
<div class="a" style="left:198px;top:143px;width:25px;height:617px;background:linear-gradient(90deg,#d9d9d9,#f4f4f4 40%,#f7f7f7 60%,#dcdcdc)"></div>
<svg style="left:203px;top:154px" width="11" height="42"><path d="M2.5 2.5 L7.5 7.5 M7.5 2.5 L2.5 7.5" stroke="#000" stroke-width="1.6"/><path d="M1.5 21.5 H9.5 M3.5 19.5 L1.5 21.5 L3.5 23.5 M7.5 19.5 L9.5 21.5 L7.5 23.5" stroke="#000" stroke-width="1.4" fill="none"/><path d="M5 34.5 L1.5 37.5 L5 40.5Z M9 34.5 L5.5 37.5 L9 40.5Z" fill="#000"/></svg>
<div class="a" style="left:199px;top:202px;width:24px;height:89px;background:#f8f8f8;border-left:1px solid #c8c8c8;border-bottom:1px solid #c8c8c8"></div>
<svg style="left:200px;top:206px" width="17" height="16" viewBox="0 0 17 16"><path d="M1 6 L8 1 L13 4 V14 H1Z" fill="#ddd" stroke="#555" stroke-width="0.8"/><path d="M1 8H13M1 11H13M5 6V14M9 6V14" stroke="#555" stroke-width="0.8"/><path d="M13 2 L16 0 V6 L13 7Z" fill="#1a1aa0"/></svg>
<div class="t" style="left:180px;top:249px;width:56px;transform:rotate(-90deg);font-size:12px;color:#333;text-align:center">Properties</div>
<div class="a" style="left:199px;top:377px;width:24px;height:1px;background:#fff"></div>
<svg style="left:203px;top:389px" width="11" height="42"><path d="M2.5 2.5 L7.5 7.5 M7.5 2.5 L2.5 7.5" stroke="#000" stroke-width="1.6"/><path d="M1.5 21.5 H9.5 M3.5 19.5 L1.5 21.5 L3.5 23.5 M7.5 19.5 L9.5 21.5 L7.5 23.5" stroke="#000" stroke-width="1.4" fill="none"/><path d="M5 34.5 L1.5 37.5 L5 40.5Z M9 34.5 L5.5 37.5 L9 40.5Z" fill="#000"/></svg>
<div class="a" style="left:199px;top:438px;width:24px;height:103px;background:#f8f8f8;border-left:1px solid #c8c8c8;border-bottom:1px solid #c8c8c8"></div>
<svg style="left:201px;top:441px" width="17" height="17" viewBox="0 0 17 17"><rect x="6.5" y="6.5" width="9" height="9" fill="#fff" stroke="#333" stroke-width="0.8"/><path d="M10 9H13M10 11H13M10 13H13" stroke="#333" stroke-width="0.8"/><path d="M2 13 L9 3" stroke="#1f3fb0" stroke-width="2.5"/><path d="M7 4 L10 1" stroke="#e0b020" stroke-width="2"/></svg>
<div class="t" style="left:175px;top:491px;width:66px;transform:rotate(-90deg);font-size:12px;color:#333;text-align:center">Drawing Info</div>

<!-- 3D VIEW -->
<div class="a" style="left:225px;top:143px;width:464px;height:603px;background:#f0f0f0;border:1px solid #6d6d6d"></div>
<!--SCENE-->
<svg style="left:226px;top:144px" width="445" height="601" viewBox="226 144 445 601">
<defs>
<filter id="nz" x="0" y="0" width="100%" height="100%"><feTurbulence type="fractalNoise" baseFrequency="0.7" numOctaves="2" seed="3"/><feColorMatrix type="matrix" values="0 0 0 0 0  0 0 0 0 0  0 0 0 0 0  0 0 0 -3.5 1.9"/><feComposite operator="in" in2="SourceGraphic"/></filter>
<filter id="nzw" x="0" y="0" width="100%" height="100%"><feTurbulence type="fractalNoise" baseFrequency="0.7" numOctaves="2" seed="7"/><feColorMatrix type="matrix" values="0 0 0 0 1  0 0 0 0 1  0 0 0 0 0.85  0 0 0 3.5 -1.6"/><feComposite operator="in" in2="SourceGraphic"/></filter>
<filter id="fk" x="0" y="0" width="100%" height="100%"><feTurbulence type="fractalNoise" baseFrequency="0.55" numOctaves="2" seed="11"/><feColorMatrix type="matrix" values="0 0 0 0 0.35  0 0 0 0 0.33  0 0 0 0 0.15  0 0 0 -3.2 1.75"/><feComposite operator="in" in2="SourceGraphic"/></filter>
<filter id="fw" x="0" y="0" width="100%" height="100%"><feTurbulence type="fractalNoise" baseFrequency="0.55" numOctaves="2" seed="5"/><feColorMatrix type="matrix" values="0 0 0 0 1  0 0 0 0 1  0 0 0 0 0.9  0 0 0 3.2 -1.45"/><feComposite operator="in" in2="SourceGraphic"/></filter>
<clipPath id="vc"><rect x="226" y="144" width="445" height="601"/></clipPath>
<linearGradient id="cush" x1="0" y1="0" x2="0" y2="1"><stop offset="0" stop-color="#e9e6d8"/><stop offset="0.6" stop-color="#dedacb"/><stop offset="1" stop-color="#bdb9a8"/></linearGradient>
<linearGradient id="seat" x1="0" y1="0" x2="0" y2="1"><stop offset="0" stop-color="#e4e0cf"/><stop offset="1" stop-color="#cfcbb9"/></linearGradient>
<linearGradient id="skirt" x1="0" y1="0" x2="0" y2="1"><stop offset="0" stop-color="#d8d4c2"/><stop offset="0.5" stop-color="#dcd8c7"/><stop offset="1" stop-color="#cdc9b6"/></linearGradient>
</defs>
<g clip-path="url(#vc)">
<rect x="226" y="144" width="445" height="130" fill="#b9cbdd"/>
<polygon points="226,255 671,261 671,560 226,560" fill="#6d7780"/>
<rect x="226" y="541" width="445" height="204" fill="#ece8cf"/>
<g filter="url(#fk)" opacity="0.35"><rect x="226" y="541" width="445" height="204" fill="#000"/></g><g filter="url(#nz)" opacity="0.1"><polygon points="226,144 671,144 671,261 226,255" fill="#000"/></g>
<g filter="url(#fw)" opacity="0.6"><rect x="226" y="541" width="445" height="204" fill="#fff"/></g><g filter="url(#nzw)" opacity="0.08"><polygon points="226,144 671,144 671,261 226,255" fill="#fff"/></g>
<circle cx="497.3" cy="304.8" r="24.4" fill="#5c2a12"/><circle cx="496.8" cy="304.2" r="23" fill="#8e5434"/><circle cx="497.3" cy="304.8" r="20.2" fill="#4a2010"/><circle cx="497.8" cy="305.3" r="19.6" fill="#d9d9da"/>
<circle cx="653.6" cy="306.6" r="24.2" fill="#5c2a12"/><circle cx="653.1" cy="306" r="22.8" fill="#8e5434"/><circle cx="653.6" cy="306.6" r="20" fill="#4a2010"/><circle cx="654.1" cy="307.1" r="19.4" fill="#d9d9da"/>
<path d="M469 366.5 L532 347 L525 365 L573 347 L563.5 369 L618 345.5 L607.5 367 C628 358 648 344 664 352 L661 362" fill="none" stroke="#4e5a64" stroke-width="4.8" stroke-linejoin="miter" stroke-miterlimit="3"/>
<rect x="311.5" y="273" width="52" height="109" fill="#8e9196"/>
<rect x="315.5" y="276" width="43" height="106" fill="#c88c6c"/>
<rect x="322.5" y="283" width="28" height="95" fill="#e0e0e2"/>
<rect x="356.5" y="283" width="2" height="98" fill="#e4e4e6"/>
<path d="M316 382 V277 H335" fill="none" stroke="#000" stroke-width="2"/>
<path d="M355 277.5 H359.5 V382" fill="none" stroke="#000" stroke-width="2.2"/>
<rect x="226" y="424" width="39" height="120" fill="#5e0632"/>
<rect x="226" y="424" width="39" height="3" fill="#9a5e3a"/>
<ellipse cx="244.4" cy="450" rx="13" ry="15" fill="#3f8a8c"/>
<rect x="634" y="425" width="40" height="115" fill="#5e0632"/>
<rect x="634" y="425" width="3" height="115" fill="#94583a"/>
<rect x="634" y="425" width="40" height="2" fill="#94583a"/>
<ellipse cx="659" cy="450" rx="13" ry="15" fill="#3f8a8c"/>
<g stroke="#c4c9ce" stroke-width="1.3"><line x1="268.7" y1="323.5" x2="268.7" y2="382"/><line x1="271.6" y1="323.5" x2="271.6" y2="382"/><line x1="276" y1="323.5" x2="276" y2="382"/><line x1="284.7" y1="323.5" x2="284.7" y2="382"/><line x1="288.4" y1="323.5" x2="288.4" y2="382"/><line x1="297.5" y1="323.5" x2="297.5" y2="382"/><line x1="304.4" y1="323.5" x2="304.4" y2="382"/><line x1="310.2" y1="323.5" x2="310.2" y2="382"/><line x1="324" y1="323.5" x2="324" y2="382"/><line x1="330.5" y1="323.5" x2="330.5" y2="382"/><line x1="337" y1="323.5" x2="337" y2="382"/><line x1="343.6" y1="323.5" x2="343.6" y2="382"/><line x1="362.5" y1="323.5" x2="362.5" y2="382"/><line x1="369" y1="323.5" x2="369" y2="382"/><line x1="375.6" y1="323.5" x2="375.6" y2="382"/></g>
<polygon points="380,370 386,376 382,382" fill="#d8aa80"/>
<polygon points="395.7,382.0 400.7,391.5 395.7,391.5" fill="#c9a27a"/><polygon points="381.0,382.0 395.7,382.0 395.7,391.5" fill="#e2b48a"/><path d="M381.0 382.0 H395.7 V391.5" fill="none" stroke="#7a4a28" stroke-width="1.1"/><polygon points="410.4,391.5 415.4,401.0 410.4,401.0" fill="#c9a27a"/><polygon points="395.7,391.5 410.4,391.5 410.4,401.0" fill="#e2b48a"/><path d="M395.7 391.5 H410.4 V401.0" fill="none" stroke="#7a4a28" stroke-width="1.1"/><polygon points="425.1,401.0 430.1,410.5 425.1,410.5" fill="#c9a27a"/><polygon points="410.4,401.0 425.1,401.0 425.1,410.5" fill="#e2b48a"/><path d="M410.4 401.0 H425.1 V410.5" fill="none" stroke="#7a4a28" stroke-width="1.1"/><polygon points="439.8,410.5 444.8,420.0 439.8,420.0" fill="#c9a27a"/><polygon points="425.1,410.5 439.8,410.5 439.8,420.0" fill="#e2b48a"/><path d="M425.1 410.5 H439.8 V420.0" fill="none" stroke="#7a4a28" stroke-width="1.1"/><polygon points="454.5,420.0 459.5,429.5 454.5,429.5" fill="#c9a27a"/><polygon points="439.8,420.0 454.5,420.0 454.5,429.5" fill="#e2b48a"/><path d="M439.8 420.0 H454.5 V429.5" fill="none" stroke="#7a4a28" stroke-width="1.1"/><polygon points="469.2,429.5 474.2,439.0 469.2,439.0" fill="#c9a27a"/><polygon points="454.5,429.5 469.2,429.5 469.2,439.0" fill="#e2b48a"/><path d="M454.5 429.5 H469.2 V439.0" fill="none" stroke="#7a4a28" stroke-width="1.1"/><polygon points="483.9,439.0 488.9,448.5 483.9,448.5" fill="#c9a27a"/><polygon points="469.2,439.0 483.9,439.0 483.9,448.5" fill="#e2b48a"/><path d="M469.2 439.0 H483.9 V448.5" fill="none" stroke="#7a4a28" stroke-width="1.1"/><polygon points="498.6,448.5 503.6,458.0 498.6,458.0" fill="#c9a27a"/><polygon points="483.9,448.5 498.6,448.5 498.6,458.0" fill="#e2b48a"/><path d="M483.9 448.5 H498.6 V458.0" fill="none" stroke="#7a4a28" stroke-width="1.1"/><polygon points="513.3,458.0 518.3,467.5 513.3,467.5" fill="#c9a27a"/><polygon points="498.6,458.0 513.3,458.0 513.3,467.5" fill="#e2b48a"/><path d="M498.6 458.0 H513.3 V467.5" fill="none" stroke="#7a4a28" stroke-width="1.1"/><polygon points="528.0,467.5 533.0,477.0 528.0,477.0" fill="#c9a27a"/><polygon points="513.3,467.5 528.0,467.5 528.0,477.0" fill="#e2b48a"/><path d="M513.3 467.5 H528.0 V477.0" fill="none" stroke="#7a4a28" stroke-width="1.1"/><polygon points="542.7,477.0 547.7,486.5 542.7,486.5" fill="#c9a27a"/><polygon points="528.0,477.0 542.7,477.0 542.7,486.5" fill="#e2b48a"/><path d="M528.0 477.0 H542.7 V486.5" fill="none" stroke="#7a4a28" stroke-width="1.1"/><polygon points="557.4,486.5 562.4,496.0 557.4,496.0" fill="#c9a27a"/><polygon points="542.7,486.5 557.4,486.5 557.4,496.0" fill="#e2b48a"/><path d="M542.7 486.5 H557.4 V496.0" fill="none" stroke="#7a4a28" stroke-width="1.1"/><polygon points="572.1,496.0 577.1,505.5 572.1,505.5" fill="#c9a27a"/><polygon points="557.4,496.0 572.1,496.0 572.1,505.5" fill="#e2b48a"/><path d="M557.4 496.0 H572.1 V505.5" fill="none" stroke="#7a4a28" stroke-width="1.1"/><polygon points="586.8,505.5 591.8,515.0 586.8,515.0" fill="#c9a27a"/><polygon points="572.1,505.5 586.8,505.5 586.8,515.0" fill="#e2b48a"/><path d="M572.1 505.5 H586.8 V515.0" fill="none" stroke="#7a4a28" stroke-width="1.1"/><polygon points="601.5,515.0 606.5,524.5 601.5,524.5" fill="#c9a27a"/><polygon points="586.8,515.0 601.5,515.0 601.5,524.5" fill="#e2b48a"/><path d="M586.8 515.0 H601.5 V524.5" fill="none" stroke="#7a4a28" stroke-width="1.1"/><polygon points="616.2,524.5 621.2,534.0 616.2,534.0" fill="#c9a27a"/><polygon points="601.5,524.5 616.2,524.5 616.2,534.0" fill="#e2b48a"/><path d="M601.5 524.5 H616.2 V534.0" fill="none" stroke="#7a4a28" stroke-width="1.1"/><polygon points="630.9,534.0 635.9,543.5 630.9,543.5" fill="#c9a27a"/><polygon points="616.2,534.0 630.9,534.0 630.9,543.5" fill="#e2b48a"/><path d="M616.2 534.0 H630.9 V543.5" fill="none" stroke="#7a4a28" stroke-width="1.1"/><polygon points="645.6,543.5 650.6,553.0 645.6,553.0" fill="#c9a27a"/><polygon points="630.9,543.5 645.6,543.5 645.6,553.0" fill="#e2b48a"/><path d="M630.9 543.5 H645.6 V553.0" fill="none" stroke="#7a4a28" stroke-width="1.1"/>
<g stroke="#b9bec4" stroke-width="1.2"><line x1="385.7" y1="326.9" x2="385.7" y2="382.0"/><line x1="393.0" y1="331.4" x2="393.0" y2="382.0"/><line x1="400.3" y1="336.0" x2="400.3" y2="391.5"/><line x1="407.6" y1="340.6" x2="407.6" y2="391.5"/><line x1="414.9" y1="345.1" x2="414.9" y2="401.0"/><line x1="422.2" y1="349.7" x2="422.2" y2="401.0"/><line x1="429.5" y1="354.3" x2="429.5" y2="410.5"/><line x1="436.8" y1="358.8" x2="436.8" y2="410.5"/><line x1="444.1" y1="363.4" x2="444.1" y2="420.0"/><line x1="451.4" y1="367.9" x2="451.4" y2="420.0"/><line x1="458.7" y1="372.5" x2="458.7" y2="429.5"/><line x1="466.0" y1="377.1" x2="466.0" y2="429.5"/><line x1="473.3" y1="381.6" x2="473.3" y2="439.0"/><line x1="480.6" y1="386.2" x2="480.6" y2="439.0"/><line x1="487.9" y1="390.8" x2="487.9" y2="448.5"/><line x1="495.2" y1="395.3" x2="495.2" y2="448.5"/><line x1="502.5" y1="399.9" x2="502.5" y2="458.0"/><line x1="509.8" y1="404.4" x2="509.8" y2="458.0"/><line x1="517.1" y1="409.0" x2="517.1" y2="467.5"/><line x1="524.4" y1="413.6" x2="524.4" y2="467.5"/><line x1="531.7" y1="418.1" x2="531.7" y2="477.0"/><line x1="539.0" y1="422.7" x2="539.0" y2="477.0"/><line x1="546.3" y1="427.2" x2="546.3" y2="486.5"/><line x1="553.6" y1="431.8" x2="553.6" y2="486.5"/><line x1="560.9" y1="436.4" x2="560.9" y2="496.0"/><line x1="568.2" y1="440.9" x2="568.2" y2="496.0"/><line x1="575.5" y1="445.5" x2="575.5" y2="505.5"/><line x1="582.8" y1="450.1" x2="582.8" y2="505.5"/><line x1="590.1" y1="454.6" x2="590.1" y2="515.0"/><line x1="597.4" y1="459.2" x2="597.4" y2="515.0"/><line x1="604.7" y1="463.7" x2="604.7" y2="524.5"/><line x1="612.0" y1="468.3" x2="612.0" y2="524.5"/><line x1="619.3" y1="472.9" x2="619.3" y2="534.0"/><line x1="626.6" y1="477.4" x2="626.6" y2="534.0"/><line x1="633.9" y1="482.0" x2="633.9" y2="543.5"/></g>
<polygon points="264,381 381,381 650,554.5 259,546 259,485 264,485" fill="#8b8d90"/>
<g filter="url(#nzw)" opacity="0.13"><polygon points="264,381 381,381 650,554.5 259,546 259,485 264,485" fill="#fff"/></g><g filter="url(#nz)" opacity="0.14"><polygon points="264,381 381,381 650,554.5 259,546 259,485 264,485" fill="#000"/></g>
<path d="M276.3 400.6 L339.6 400.6 L340.3 420 L345.3 442.7 L355.3 460.2 L367.9 470.3 L384.2 477.5 L357.8 474 L332.7 465.3 L307.6 450.2 L288.8 435.2 L276.3 422.6Z" fill="#6a58c4"/>
<path d="M276.3 401 L339.6 400.6 L340.3 420 L345.3 442.7 L355.3 460.2 L367.9 470.3 L384.2 477.2 L347.8 466.5 L317.7 449 L295 426.4Z" fill="#95109f"/>
<path d="M308.9 400.6 L339.6 400.6 L340.3 420 L345.3 442.7 L355.3 460.2 L367.9 470.3 L384.2 477.2 L350.3 460.2 L332.7 441.4 L320.2 422.6Z" fill="#b3846a"/>
<path d="M280 406.3 L311.4 406.9 C320 407 330 408 335.2 412.6 L320.2 421.3 L294.5 433.9 L307.6 436.4 L341.5 438.9 L336.5 445.2 L321.4 457.1 L350.3 456.5 L352.8 460.2 L350.3 470.3 L361.6 472.8" fill="none" stroke="#1c1a24" stroke-width="2.6" stroke-linejoin="round"/>
<circle cx="407" cy="451" r="23.4" fill="#6c7780"/>
<path d="M398 429 A23.4 23.4 0 0 0 407 474.4" fill="none" stroke="#fff" stroke-width="1" stroke-dasharray="1.5 2"/>
<line x1="266" y1="322.5" x2="380" y2="322.5" stroke="#000" stroke-width="3"/>
<line x1="379.5" y1="322" x2="636" y2="482.3" stroke="#000" stroke-width="2.2"/>
<path d="M273 326 L278 330 M280 331 L284 334.5 M286 335.5 L290.5 339" stroke="#000" stroke-width="2.4"/>
<g stroke="#cfd3d8" stroke-width="1.1"><line x1="262.0" y1="487" x2="262.0" y2="554"/><line x1="268.6" y1="487" x2="268.6" y2="554"/><line x1="275.2" y1="487" x2="275.2" y2="554"/><line x1="281.8" y1="487" x2="281.8" y2="554"/><line x1="288.4" y1="487" x2="288.4" y2="554"/><line x1="295.0" y1="487" x2="295.0" y2="554"/><line x1="301.6" y1="487" x2="301.6" y2="554"/><line x1="308.2" y1="487" x2="308.2" y2="554"/><line x1="314.8" y1="487" x2="314.8" y2="554"/><line x1="321.4" y1="487" x2="321.4" y2="554"/><line x1="328.0" y1="487" x2="328.0" y2="554"/><line x1="334.6" y1="487" x2="334.6" y2="554"/><line x1="341.2" y1="487" x2="341.2" y2="554"/><line x1="347.8" y1="487" x2="347.8" y2="554"/><line x1="354.4" y1="487" x2="354.4" y2="554"/><line x1="361.0" y1="487" x2="361.0" y2="554"/><line x1="367.6" y1="487" x2="367.6" y2="554"/><line x1="374.2" y1="487" x2="374.2" y2="554"/><line x1="380.8" y1="487" x2="380.8" y2="554"/><line x1="387.4" y1="487" x2="387.4" y2="554"/><line x1="394.0" y1="487" x2="394.0" y2="554"/><line x1="400.6" y1="487" x2="400.6" y2="554"/><line x1="407.2" y1="487" x2="407.2" y2="554"/><line x1="413.8" y1="487" x2="413.8" y2="554"/><line x1="420.4" y1="487" x2="420.4" y2="554"/><line x1="427.0" y1="487" x2="427.0" y2="554"/><line x1="433.6" y1="487" x2="433.6" y2="554"/><line x1="440.2" y1="487" x2="440.2" y2="554"/><line x1="446.8" y1="487" x2="446.8" y2="554"/><line x1="453.4" y1="487" x2="453.4" y2="554"/><line x1="460.0" y1="487" x2="460.0" y2="554"/><line x1="466.6" y1="487" x2="466.6" y2="554"/><line x1="473.2" y1="487" x2="473.2" y2="554"/><line x1="479.8" y1="487" x2="479.8" y2="554"/><line x1="486.4" y1="487" x2="486.4" y2="554"/><line x1="493.0" y1="487" x2="493.0" y2="554"/><line x1="499.6" y1="487" x2="499.6" y2="554"/><line x1="506.2" y1="487" x2="506.2" y2="554"/><line x1="512.8" y1="487" x2="512.8" y2="554"/><line x1="519.4" y1="487" x2="519.4" y2="554"/><line x1="526.0" y1="487" x2="526.0" y2="554"/><line x1="532.6" y1="487" x2="532.6" y2="554"/><line x1="539.2" y1="487" x2="539.2" y2="554"/><line x1="545.8" y1="487" x2="545.8" y2="554"/><line x1="552.4" y1="487" x2="552.4" y2="554"/><line x1="559.0" y1="487" x2="559.0" y2="554"/><line x1="565.6" y1="487" x2="565.6" y2="554"/><line x1="572.2" y1="487" x2="572.2" y2="554"/><line x1="578.8" y1="487" x2="578.8" y2="554"/><line x1="585.4" y1="487" x2="585.4" y2="554"/><line x1="592.0" y1="487" x2="592.0" y2="554"/><line x1="598.6" y1="487" x2="598.6" y2="554"/><line x1="605.2" y1="487" x2="605.2" y2="554"/><line x1="611.8" y1="487" x2="611.8" y2="554"/><line x1="618.4" y1="487" x2="618.4" y2="554"/><line x1="625.0" y1="487" x2="625.0" y2="554"/><line x1="631.6" y1="487" x2="631.6" y2="554"/><line x1="638.2" y1="487" x2="638.2" y2="554"/><line x1="644.8" y1="487" x2="644.8" y2="554"/></g>
<line x1="259" y1="485" x2="649" y2="485" stroke="#000" stroke-width="3.2"/>
<!-- sofa -->
<path d="M283 523 V499 Q283 493 290 493 H387 Q392 493 392 498 V523Z" fill="url(#cush)"/>
<path d="M283 523 V499 Q283 493 290 493 H296 V523Z" fill="#c2beac"/>
<path d="M391 523 V498 Q391 493 396 493 H487 Q499 493 501 503 V523Z" fill="url(#cush)"/>
<path d="M376 496 Q390 500 391 523 H372Z" fill="#c8c4b2" opacity="0.7"/>
<path d="M482 496 Q499 500 500 523 H478Z" fill="#c4c0ae" opacity="0.7"/>
<path d="M258 527 Q259 519 270 518 L293 517 L294 534 L268 535 Q258 534 258 527Z" fill="#d8d4c3"/>
<ellipse cx="264" cy="527" rx="6.5" ry="7.5" fill="#c9c5b3"/>
<path d="M485 518 L507 515 Q518 517 517 526 Q516 533 507 533 L485 533Z" fill="#dbd7c6"/>
<path d="M268 534 L274 524 H504 L510 534Z" fill="#e3dfcf"/>
<rect x="262" y="534" width="248" height="13" fill="#d4d0be"/>
<rect x="262" y="544" width="248" height="3" fill="#c2beac"/>
<path d="M261 547 H511 V575 H262 L260 566Z" fill="url(#skirt)"/>
<rect x="261" y="551" width="250" height="2" fill="#c4c0ae"/>
<path d="M386 525 L384 547" stroke="#b4b09e" stroke-width="2"/>
<g stroke="#34342e" stroke-width="1" opacity="0.9">
<line x1="328.5" y1="497" x2="328.5" y2="522"/><line x1="349.5" y1="497" x2="349.5" y2="522"/><line x1="370" y1="500" x2="370" y2="522"/><line x1="432.5" y1="496" x2="432.5" y2="522"/><line x1="452" y1="497" x2="452" y2="522"/><line x1="473" y1="497" x2="473" y2="522"/>
<line x1="273" y1="535" x2="273" y2="575"/><line x1="295.5" y1="535" x2="295.5" y2="575"/><line x1="318.5" y1="535" x2="318.5" y2="560"/><line x1="341" y1="535" x2="341" y2="575"/>
<line x1="409" y1="535" x2="409" y2="575"/><line x1="454.5" y1="535" x2="454.5" y2="575"/><line x1="499.3" y1="535" x2="499.3" y2="575"/>
<line x1="300" y1="529" x2="296" y2="534"/><line x1="322" y1="529" x2="318" y2="534"/><line x1="344" y1="528" x2="341" y2="534"/><line x1="457" y1="528" x2="455" y2="534"/>
</g>
<g stroke="#5a5a52" stroke-width="1" opacity="0.7"><line x1="290" y1="500" x2="498" y2="500"/><line x1="262" y1="535" x2="509" y2="535"/><line x1="262" y1="552" x2="320" y2="552"/><line x1="330" y1="552" x2="380" y2="552"/><line x1="470" y1="551" x2="509" y2="551"/></g>
<path d="M289 513 Q299 506 316 509 Q322 514 325 522 Q312 528 297 527 Z" fill="#9c0e4c"/>
<path d="M294 514 Q305 509 315 511" stroke="#c43a78" stroke-width="1.6" fill="none"/>
<rect x="406.5" y="508.5" width="31" height="18" rx="4" fill="#9c0e4c"/>
<path d="M410 520 Q418 523 426 521" stroke="#c43a78" stroke-width="1.4" fill="none"/>
<ellipse cx="490" cy="516.5" rx="15" ry="7.5" transform="rotate(-24 490 516.5)" fill="#9c0e4c"/>
<path d="M481 520 Q490 514 499 511" stroke="#c43a78" stroke-width="1.4" fill="none"/>
<!-- table -->
<g stroke="#7e5a4c" stroke-width="3.4" fill="none" stroke-linecap="square">
<path d="M344 558 H427 M322 587 H427 M344 558 L322 587"/>
<path d="M323 587 V630 M426.5 558 V630 M344 558 V598 M323 622 H427 M344 598 L323 622"/>
</g>
<g stroke="#b08878" stroke-width="1" fill="none" opacity="0.8">
<path d="M345 557 H426 M323 586 H426 M323.5 588 V629 M427 559 V629"/>
</g>
<path d="M383 575 L410 571 L418 578 L393 582Z" fill="#d0821a"/>
<path d="M386 576 L400 574" stroke="#5a8a2a" stroke-width="1.2"/>
</g>

</svg>
<!--/SCENE-->

<!--RIGHT-->
<!-- RIGHT PANEL -->
<div class="a" style="left:717px;top:143px;width:202px;height:625px;background:#f0f0f0"></div>
<div class="a" style="left:717px;top:143px;width:2px;height:380px;background:#8a8a8a"></div>
<div class="a" style="left:719px;top:143px;width:199px;height:24px;background:#f0f0f0;border-bottom:1px solid #8a8a8a"></div>
<div class="t" style="left:719px;top:152px;font-size:11px;letter-spacing:-0.4px;line-height:11px">Stair</div>
<div class="a" style="left:719px;top:168px;width:199px;height:289px;background:#fff"></div>
<div style="position:absolute;left:719px;top:168px;width:187px;height:289px;overflow:hidden">
<div class="a" style="left:95px;top:198px;width:95px;height:18px;background:#ececec"></div>
<div class="a" style="left:27px;top:0px;width:1px;height:289px;background:repeating-linear-gradient(#8a8a8a 0 1px,transparent 1px 2px)"></div>
<div class="a" style="left:46px;top:0px;width:1px;height:279px;background:repeating-linear-gradient(#8a8a8a 0 1px,transparent 1px 2px)"></div>
<div class="a" style="left:65px;top:0px;width:1px;height:45px;background:repeating-linear-gradient(#8a8a8a 0 1px,transparent 1px 2px)"></div>
<div class="a" style="left:65px;top:198px;width:1px;height:63px;background:repeating-linear-gradient(#8a8a8a 0 1px,transparent 1px 2px)"></div>
<div class="a" style="left:66px;top:9px;width:12px;height:1px;background:repeating-linear-gradient(90deg,#8a8a8a 0 1px,transparent 1px 2px)"></div>
<div class="a" style="left:80px;top:5px;width:8px;height:8px;border-radius:50%;background:#0000e0"></div>
<div class="t" style="left:96px;top:2px">4" Wall</div>
<div class="a" style="left:66px;top:27px;width:12px;height:1px;background:repeating-linear-gradient(90deg,#8a8a8a 0 1px,transparent 1px 2px)"></div>
<div class="a" style="left:80px;top:23px;width:8px;height:8px;border-radius:50%;background:#000"></div>
<div class="t" style="left:96px;top:20px">6" Wall</div>
<div class="a" style="left:66px;top:45px;width:12px;height:1px;background:repeating-linear-gradient(90deg,#8a8a8a 0 1px,transparent 1px 2px)"></div>
<div class="a" style="left:80px;top:41px;width:8px;height:8px;border-radius:50%;background:#0000e0"></div>
<div class="t" style="left:96px;top:38px">8" Wall</div>
<div class="a" style="left:51px;top:63px;width:10px;height:1px;background:repeating-linear-gradient(90deg,#8a8a8a 0 1px,transparent 1px 2px)"></div>
<div class="a" style="left:41px;top:59px;width:9px;height:9px;border:1px solid #8a8a8a;background:#fff"></div>
<svg style="left:41px;top:59px" width="9" height="9"><g stroke="#000"><path d="M2 4.5H7"/><path d="M4.5 2V7"/></g></svg>
<svg style="left:57px;top:55px" width="18" height="16" viewBox="0 0 18 16"><path d="M8.5 1.9 L11.1 3.2 V5.8 L8.5 7.1 L5.9 5.8 V3.2Z" fill="#e8e8e8" stroke="#3a3a3a" stroke-width="0.9"/><path d="M5.9 3.2 L8.5 4.5 L11.1 3.2 M8.5 4.5 V7.1" stroke="#3a3a3a" stroke-width="0.7" fill="none"/><path d="M5 6.9 L7.6 8.2 V10.8 L5 12.1 L2.4 10.8 V8.2Z" fill="#e8e8e8" stroke="#3a3a3a" stroke-width="0.9"/><path d="M2.4 8.2 L5 9.5 L7.6 8.2 M5 9.5 V12.1" stroke="#3a3a3a" stroke-width="0.7" fill="none"/><path d="M11.5 7.4 L14.1 8.7 V11.3 L11.5 12.6 L8.9 11.3 V8.7Z" fill="#e8e8e8" stroke="#3a3a3a" stroke-width="0.9"/><path d="M8.9 8.7 L11.5 10 L14.1 8.7 M11.5 10 V12.6" stroke="#3a3a3a" stroke-width="0.7" fill="none"/></svg>
<div class="t" style="left:78px;top:56px">Stud Walls</div>
<div class="a" style="left:51px;top:81px;width:10px;height:1px;background:repeating-linear-gradient(90deg,#8a8a8a 0 1px,transparent 1px 2px)"></div>
<div class="a" style="left:41px;top:77px;width:9px;height:9px;border:1px solid #8a8a8a;background:#fff"></div>
<svg style="left:41px;top:77px" width="9" height="9"><g stroke="#000"><path d="M2 4.5H7"/><path d="M4.5 2V7"/></g></svg>
<svg style="left:57px;top:73px" width="18" height="16" viewBox="0 0 18 16"><path d="M8.5 1.9 L11.1 3.2 V5.8 L8.5 7.1 L5.9 5.8 V3.2Z" fill="#e8e8e8" stroke="#3a3a3a" stroke-width="0.9"/><path d="M5.9 3.2 L8.5 4.5 L11.1 3.2 M8.5 4.5 V7.1" stroke="#3a3a3a" stroke-width="0.7" fill="none"/><path d="M5 6.9 L7.6 8.2 V10.8 L5 12.1 L2.4 10.8 V8.2Z" fill="#e8e8e8" stroke="#3a3a3a" stroke-width="0.9"/><path d="M2.4 8.2 L5 9.5 L7.6 8.2 M5 9.5 V12.1" stroke="#3a3a3a" stroke-width="0.7" fill="none"/><path d="M11.5 7.4 L14.1 8.7 V11.3 L11.5 12.6 L8.9 11.3 V8.7Z" fill="#e8e8e8" stroke="#3a3a3a" stroke-width="0.9"/><path d="M8.9 8.7 L11.5 10 L14.1 8.7 M11.5 10 V12.6" stroke="#3a3a3a" stroke-width="0.7" fill="none"/></svg>
<div class="t" style="left:78px;top:74px">Masonry Walls</div>
<div class="a" style="left:51px;top:99px;width:10px;height:1px;background:repeating-linear-gradient(90deg,#8a8a8a 0 1px,transparent 1px 2px)"></div>
<div class="a" style="left:41px;top:95px;width:9px;height:9px;border:1px solid #8a8a8a;background:#fff"></div>
<svg style="left:41px;top:95px" width="9" height="9"><g stroke="#000"><path d="M2 4.5H7"/><path d="M4.5 2V7"/></g></svg>
<svg style="left:57px;top:91px" width="18" height="16" viewBox="0 0 18 16"><path d="M8.5 1.9 L11.1 3.2 V5.8 L8.5 7.1 L5.9 5.8 V3.2Z" fill="#e8e8e8" stroke="#3a3a3a" stroke-width="0.9"/><path d="M5.9 3.2 L8.5 4.5 L11.1 3.2 M8.5 4.5 V7.1" stroke="#3a3a3a" stroke-width="0.7" fill="none"/><path d="M5 6.9 L7.6 8.2 V10.8 L5 12.1 L2.4 10.8 V8.2Z" fill="#e8e8e8" stroke="#3a3a3a" stroke-width="0.9"/><path d="M2.4 8.2 L5 9.5 L7.6 8.2 M5 9.5 V12.1" stroke="#3a3a3a" stroke-width="0.7" fill="none"/><path d="M11.5 7.4 L14.1 8.7 V11.3 L11.5 12.6 L8.9 11.3 V8.7Z" fill="#e8e8e8" stroke="#3a3a3a" stroke-width="0.9"/><path d="M8.9 8.7 L11.5 10 L14.1 8.7 M11.5 10 V12.6" stroke="#3a3a3a" stroke-width="0.7" fill="none"/></svg>
<div class="t" style="left:78px;top:92px">Concrete Walls</div>
<div class="a" style="left:51px;top:117px;width:10px;height:1px;background:repeating-linear-gradient(90deg,#8a8a8a 0 1px,transparent 1px 2px)"></div>
<div class="a" style="left:41px;top:113px;width:9px;height:9px;border:1px solid #8a8a8a;background:#fff"></div>
<svg style="left:41px;top:113px" width="9" height="9"><g stroke="#000"><path d="M2 4.5H7"/><path d="M4.5 2V7"/></g></svg>
<svg style="left:57px;top:109px" width="18" height="16" viewBox="0 0 18 16"><path d="M8.5 1.9 L11.1 3.2 V5.8 L8.5 7.1 L5.9 5.8 V3.2Z" fill="#e8e8e8" stroke="#3a3a3a" stroke-width="0.9"/><path d="M5.9 3.2 L8.5 4.5 L11.1 3.2 M8.5 4.5 V7.1" stroke="#3a3a3a" stroke-width="0.7" fill="none"/><path d="M5 6.9 L7.6 8.2 V10.8 L5 12.1 L2.4 10.8 V8.2Z" fill="#e8e8e8" stroke="#3a3a3a" stroke-width="0.9"/><path d="M2.4 8.2 L5 9.5 L7.6 8.2 M5 9.5 V12.1" stroke="#3a3a3a" stroke-width="0.7" fill="none"/><path d="M11.5 7.4 L14.1 8.7 V11.3 L11.5 12.6 L8.9 11.3 V8.7Z" fill="#e8e8e8" stroke="#3a3a3a" stroke-width="0.9"/><path d="M8.9 8.7 L11.5 10 L14.1 8.7 M11.5 10 V12.6" stroke="#3a3a3a" stroke-width="0.7" fill="none"/></svg>
<div class="t" style="left:78px;top:110px">Invisible Walls</div>
<div class="a" style="left:32px;top:135px;width:9px;height:1px;background:repeating-linear-gradient(90deg,#8a8a8a 0 1px,transparent 1px 2px)"></div>
<div class="a" style="left:23px;top:131px;width:9px;height:9px;border:1px solid #8a8a8a;background:#fff"></div>
<svg style="left:23px;top:131px" width="9" height="9"><g stroke="#000"><path d="M2 4.5H7"/><path d="M4.5 2V7"/></g></svg>
<svg style="left:37px;top:127px" width="18" height="16" viewBox="0 0 18 16"><path d="M4 1.8h9M4 14.2h9" stroke="#000" stroke-width="1.8"/><path d="M6.5 2.5v11M10.5 2.5v11" stroke="#000" stroke-width="1.1" fill="none"/></svg>
<div class="t" style="left:59px;top:128px;font-weight:bold">Column</div>
<div class="a" style="left:32px;top:153px;width:9px;height:1px;background:repeating-linear-gradient(90deg,#8a8a8a 0 1px,transparent 1px 2px)"></div>
<div class="a" style="left:23px;top:149px;width:9px;height:9px;border:1px solid #8a8a8a;background:#fff"></div>
<svg style="left:23px;top:149px" width="9" height="9"><g stroke="#000"><path d="M2 4.5H7"/><path d="M4.5 2V7"/></g></svg>
<svg style="left:37px;top:145px" width="18" height="16" viewBox="0 0 18 16"><path d="M2 12 L6 7 L9 5 L14 4 L17 8 L13 12 L7 13Z" fill="#fff" stroke="#000" stroke-width="1.1"/><path d="M2 12 L6 7 L7 11Z" fill="#000"/><path d="M9 5 L7 11" stroke="#000" stroke-width="0.9"/></svg>
<div class="t" style="left:59px;top:146px;font-weight:bold">Roof</div>
<div class="a" style="left:32px;top:171px;width:9px;height:1px;background:repeating-linear-gradient(90deg,#8a8a8a 0 1px,transparent 1px 2px)"></div>
<div class="a" style="left:23px;top:167px;width:9px;height:9px;border:1px solid #8a8a8a;background:#fff"></div>
<svg style="left:23px;top:167px" width="9" height="9"><g stroke="#000"><path d="M2 4.5H7"/></g></svg>
<svg style="left:37px;top:163px" width="18" height="16" viewBox="0 0 18 16"><path d="M2 6 L7 2 L16 10 L11 15Z" fill="#fff" stroke="#000" stroke-width="1.2"/><path d="M4.5 4 C6 6 6 7 5 8 M7 2.5 C9 5 9 6 8 7.5 M10 5 C12 8 11 9 10 10 M13 7.5 C14 10 13 11 12.5 12" stroke="#000" stroke-width="1" fill="none"/></svg>
<div class="t" style="left:59px;top:164px;font-weight:bold">Stair</div>
<div class="a" style="left:51px;top:189px;width:10px;height:1px;background:repeating-linear-gradient(90deg,#8a8a8a 0 1px,transparent 1px 2px)"></div>
<div class="a" style="left:41px;top:185px;width:9px;height:9px;border:1px solid #8a8a8a;background:#fff"></div>
<svg style="left:41px;top:185px" width="9" height="9"><g stroke="#000"><path d="M2 4.5H7"/></g></svg>
<svg style="left:57px;top:181px" width="18" height="16" viewBox="0 0 18 16"><path d="M8.5 1.9 L11.1 3.2 V5.8 L8.5 7.1 L5.9 5.8 V3.2Z" fill="#e8e8e8" stroke="#3a3a3a" stroke-width="0.9"/><path d="M5.9 3.2 L8.5 4.5 L11.1 3.2 M8.5 4.5 V7.1" stroke="#3a3a3a" stroke-width="0.7" fill="none"/><path d="M5 6.9 L7.6 8.2 V10.8 L5 12.1 L2.4 10.8 V8.2Z" fill="#e8e8e8" stroke="#3a3a3a" stroke-width="0.9"/><path d="M2.4 8.2 L5 9.5 L7.6 8.2 M5 9.5 V12.1" stroke="#3a3a3a" stroke-width="0.7" fill="none"/><path d="M11.5 7.4 L14.1 8.7 V11.3 L11.5 12.6 L8.9 11.3 V8.7Z" fill="#e8e8e8" stroke="#3a3a3a" stroke-width="0.9"/><path d="M8.9 8.7 L11.5 10 L14.1 8.7 M11.5 10 V12.6" stroke="#3a3a3a" stroke-width="0.7" fill="none"/></svg>
<div class="t" style="left:78px;top:182px">Open Stringer</div>
<div class="a" style="left:66px;top:207px;width:12px;height:1px;background:repeating-linear-gradient(90deg,#8a8a8a 0 1px,transparent 1px 2px)"></div>
<div class="a" style="left:80px;top:203px;width:8px;height:8px;border-radius:50%;background:#0000e0"></div>
<div class="t" style="left:96px;top:200px">Closed riser - 3'-6</div>
<div class="a" style="left:66px;top:225px;width:12px;height:1px;background:repeating-linear-gradient(90deg,#8a8a8a 0 1px,transparent 1px 2px)"></div>
<div class="a" style="left:80px;top:221px;width:8px;height:8px;border-radius:50%;background:#000"></div>
<div class="t" style="left:96px;top:218px">Closed riser - 3'w</div>
<div class="a" style="left:66px;top:243px;width:12px;height:1px;background:repeating-linear-gradient(90deg,#8a8a8a 0 1px,transparent 1px 2px)"></div>
<div class="a" style="left:80px;top:239px;width:8px;height:8px;border-radius:50%;background:#000"></div>
<div class="t" style="left:96px;top:236px">Open riser - 3'-6'</div>
<div class="a" style="left:66px;top:261px;width:12px;height:1px;background:repeating-linear-gradient(90deg,#8a8a8a 0 1px,transparent 1px 2px)"></div>
<div class="a" style="left:80px;top:257px;width:8px;height:8px;border-radius:50%;background:#0000e0"></div>
<div class="t" style="left:96px;top:254px">Open riser - 3'w</div>
<div class="a" style="left:51px;top:279px;width:10px;height:1px;background:repeating-linear-gradient(90deg,#8a8a8a 0 1px,transparent 1px 2px)"></div>
<div class="a" style="left:41px;top:275px;width:9px;height:9px;border:1px solid #8a8a8a;background:#fff"></div>
<svg style="left:41px;top:275px" width="9" height="9"><g stroke="#000"><path d="M2 4.5H7"/><path d="M4.5 2V7"/></g></svg>
<svg style="left:57px;top:271px" width="18" height="16" viewBox="0 0 18 16"><path d="M8.5 1.9 L11.1 3.2 V5.8 L8.5 7.1 L5.9 5.8 V3.2Z" fill="#e8e8e8" stroke="#3a3a3a" stroke-width="0.9"/><path d="M5.9 3.2 L8.5 4.5 L11.1 3.2 M8.5 4.5 V7.1" stroke="#3a3a3a" stroke-width="0.7" fill="none"/><path d="M5 6.9 L7.6 8.2 V10.8 L5 12.1 L2.4 10.8 V8.2Z" fill="#e8e8e8" stroke="#3a3a3a" stroke-width="0.9"/><path d="M2.4 8.2 L5 9.5 L7.6 8.2 M5 9.5 V12.1" stroke="#3a3a3a" stroke-width="0.7" fill="none"/><path d="M11.5 7.4 L14.1 8.7 V11.3 L11.5 12.6 L8.9 11.3 V8.7Z" fill="#e8e8e8" stroke="#3a3a3a" stroke-width="0.9"/><path d="M8.9 8.7 L11.5 10 L14.1 8.7 M11.5 10 V12.6" stroke="#3a3a3a" stroke-width="0.7" fill="none"/></svg>
<div class="t" style="left:78px;top:272px">Closed Stringer</div>

</div>
<div class="a" style="left:906px;top:168px;width:12px;height:289px;background:#f0f0f0;border-left:1px solid #e8e8e8"></div>
<svg style="left:907px;top:173px" width="10" height="6"><path d="M1 5 L5 1 L9 5Z" fill="#606060"/></svg>
<svg style="left:907px;top:444px" width="10" height="6"><path d="M1 1 L5 5 L9 1Z" fill="#606060"/></svg>
<div class="a" style="left:906px;top:206px;width:12px;height:94px;background:linear-gradient(90deg,#e9e9e9,#dcdcdc);border:1px solid #a8a8a8;border-radius:2px"></div>
<svg style="left:908px;top:249px" width="8" height="6"><path d="M0 0.5H8M0 2.5H8M0 4.5H8" stroke="#555"/></svg>
<div class="a" style="left:719px;top:457px;width:199px;height:14px;background:#f0f0f0"></div>
<svg style="left:724px;top:460px" width="6" height="9"><path d="M5 0.5 L1 4.5 L5 8.5Z" fill="#606060"/></svg>
<svg style="left:894px;top:460px" width="6" height="9"><path d="M1 0.5 L5 4.5 L1 8.5Z" fill="#606060"/></svg>
<div class="a" style="left:737px;top:457px;width:134px;height:13px;background:linear-gradient(#ececec,#d9d9d9);border:1px solid #a8a8a8;border-radius:2px"></div>
<svg style="left:800px;top:460px" width="7" height="8"><path d="M0.5 0V8M2.5 0V8M4.5 0V8" stroke="#555"/></svg>
<div class="a" style="left:719px;top:471px;width:199px;height:1px;background:#a0a0a0"></div>
<!-- right panel toolbar -->
<div class="a" style="left:719px;top:472px;width:199px;height:1px;background:#fff"></div>
<svg style="left:723px;top:482px" width="18" height="17" viewBox="0 0 18 17"><path d="M1 11 L10 6 L17 9 L8 15Z" fill="#7ad27a" stroke="#2a6a2a"/><path d="M1 12 L8 16 L17 10" stroke="#2a6a2a" fill="none"/><path d="M4 4 C6 1 10 1 11 4" stroke="#1a4ad0" stroke-width="1.4" fill="none"/><path d="M9 3 L12 5 L12 1Z" fill="#1a4ad0"/></svg>
<div class="a" style="left:745px;top:481px;width:1px;height:20px;background:#a0a0a0"></div>
<svg style="left:751px;top:482px" width="17" height="16" viewBox="0 0 17 16"><path d="M1.5 4.5 H6 L7 3 H12 V14.5 H1.5Z" fill="#fff" stroke="#000"/><path d="M3 8H8M3 11H8" stroke="#888" stroke-dasharray="1 1"/><path d="M10 10 L15 2" stroke="#000" stroke-width="1.5"/></svg>
<svg style="left:775px;top:482px" width="17" height="16" viewBox="0 0 17 16"><path d="M1.5 4.5 H6 L7 3 H12 V14.5 H1.5Z" fill="#fff" stroke="#000"/><path d="M3 8H8M3 11H8" stroke="#888" stroke-dasharray="1 1"/><path d="M12 2 V11 M7.5 6.5 H16.5" stroke="#e8c800" stroke-width="3"/></svg>
<div class="a" style="left:797px;top:481px;width:1px;height:20px;background:#a0a0a0"></div>
<svg style="left:804px;top:482px" width="17" height="16" viewBox="0 0 17 16"><path d="M6.5 1.5 H11 L12 3 H15.5 V9.5 H6.5Z" fill="#fff" stroke="#000"/><path d="M1.5 7.5 H10.5 V14.5 H1.5Z" fill="#fff" stroke="#000"/><path d="M3 10.5H6" stroke="#1a3ab0" stroke-width="1.2"/></svg>
<div class="a" style="left:826px;top:481px;width:1px;height:20px;background:#a0a0a0"></div>
<svg style="left:833px;top:482px" width="16" height="16" viewBox="0 0 16 16"><rect x="1" y="1" width="3" height="3" fill="none" stroke="#1a3ab0"/><rect x="11" y="6" width="3" height="3" fill="none" stroke="#1a3ab0"/><rect x="11" y="11" width="3" height="3" fill="none" stroke="#1a3ab0"/><path d="M2.5 5 V13 M3 7.5 H10 M3 12.5 H10" stroke="#000" stroke-dasharray="1 1"/></svg>
<svg style="left:857px;top:482px" width="12" height="16" viewBox="0 0 12 16"><rect x="6" y="1" width="4" height="3" fill="none" stroke="#1a3ab0"/><rect x="6" y="6.5" width="4" height="3" fill="none" stroke="#1a3ab0"/><rect x="6" y="12" width="4" height="3" fill="none" stroke="#1a3ab0"/><path d="M2.5 1 V15 M3 2.5H6M3 8H6M3 13.5H6" stroke="#000" stroke-dasharray="1 1"/></svg>
<div class="a" style="left:878px;top:481px;width:1px;height:20px;background:#a0a0a0"></div>
<div class="t" style="left:884px;top:481px;font-size:8px;line-height:8px;letter-spacing:-0.3px;font-weight:bold">1st</div>
<div class="t" style="left:891px;top:490px;font-size:8px;line-height:8px;letter-spacing:-0.3px;font-weight:bold">2nd</div>
<svg style="left:884px;top:482px" width="18" height="17"><path d="M14 2 V7 M12 5 L14 7.5 L16 5" stroke="#1a3ab0" fill="none" stroke-width="1.2"/><path d="M5 16 V10 M3 12 L5 9.5 L7 12" stroke="#1a3ab0" fill="none" stroke-width="1.2"/></svg>
<svg style="left:907px;top:482px" width="11" height="16"><rect x="1.5" y="1.5" width="8" height="8" fill="none" stroke="#b0b0b0"/><path d="M3 13 H9 M3 11 L1 13 L3 15" stroke="#b0b0b0" fill="none"/></svg>
<div class="a" style="left:723px;top:514px;width:194px;height:2px;background:#1a1a1a"></div>
<div class="a" style="left:915px;top:510px;width:2px;height:5px;background:#1a1a1a"></div>
<!-- 3D preview -->
<div class="a" style="left:717px;top:520px;width:202px;height:247px;background:#d9dadc;border-left:2px solid #8a8a8a;border-top:1px solid #a0a0a0"></div>
<svg style="left:718px;top:521px" width="200" height="245" viewBox="0 0 200 245">
<defs><linearGradient id="pst" x1="0" x2="1"><stop offset="0" stop-color="#7a6848"/><stop offset="0.45" stop-color="#b49c6c"/><stop offset="1" stop-color="#7c6a48"/></linearGradient></defs>
<!-- back posts & balusters -->
<rect x="14" y="0" width="8" height="104" fill="url(#pst)"/>
<rect x="108" y="0" width="7" height="72" fill="url(#pst)"/>
<rect x="120" y="0" width="3.5" height="88" fill="url(#pst)"/>
<rect x="131.5" y="0" width="3.5" height="92" fill="url(#pst)"/>
<rect x="143" y="0" width="3.7" height="107" fill="url(#pst)"/>
<rect x="154" y="0" width="4.3" height="112" fill="url(#pst)"/>
<!-- back board -->
<polygon points="15.8,104.8 118.7,71 118.7,85 15.8,118.7" fill="#7b6a4a"/>
<!-- treads/risers -->
<polygon points="16.3,118.7 118.7,85.5 142,93.1 39.6,125.7" fill="#d5caa0"/>
<polygon points="39.6,125.7 142,93.1 142,104.8 39.6,137.4" fill="#8c7852"/>
<polygon points="16.3,118.7 39.6,125.7 39.6,137.4 61.7,146.7 61.7,158.3 82.7,167.6 83.8,178.1 60,165 20,124" fill="#9c8660"/>
<polygon points="39.6,137.4 142,104.8 165.3,114 61.7,146.7" fill="#d8cda4"/>
<polygon points="61.7,146.7 165.3,114 165.3,125.7 61.7,158.3" fill="#8c7852"/>
<polygon points="61.7,158.3 165.3,125.7 188.6,133.9 82.7,167.6" fill="#dacfa6"/>
<polygon points="82.7,167.6 188.6,133.9 186.3,143.2 83.8,178.1" fill="#8a7650"/>
<!-- front balusters -->
<rect x="26.8" y="0" width="4.6" height="119" fill="url(#pst)"/>
<rect x="38.4" y="0" width="3.6" height="122" fill="url(#pst)"/>
<rect x="49" y="14" width="4" height="126" fill="url(#pst)"/>
<rect x="60.5" y="25.6" width="3.5" height="117" fill="url(#pst)"/>
<path d="M38 3 L77 34" stroke="#b49a68" stroke-width="4.5"/>
<rect x="75.7" y="26.8" width="7" height="136" fill="url(#pst)"/>
<ellipse cx="79.2" cy="27.5" rx="3.5" ry="1.5" fill="#c8b088"/>
<rect x="168.8" y="0" width="8.2" height="131.5" fill="url(#pst)"/>
<path d="M166 3 L173 8" stroke="#b49a68" stroke-width="3"/>
</svg>
<!-- RIGHT TAB STRIP -->
<div class="a" style="left:689px;top:143px;width:28px;height:625px;background:linear-gradient(90deg,#dadada,#f2f2f2 45%,#f5f5f5 60%,#d6d6d6)"></div>
<svg style="left:699px;top:154px" width="11" height="42"><path d="M2.5 2.5 L7.5 7.5 M7.5 2.5 L2.5 7.5" stroke="#000" stroke-width="1.6"/><path d="M1.5 21.5 H9.5 M3.5 19.5 L1.5 21.5 L3.5 23.5 M7.5 19.5 L9.5 21.5 L7.5 23.5" stroke="#000" stroke-width="1.4" fill="none"/><path d="M2 34.5 L5.5 37.5 L2 40.5Z M6 34.5 L9.5 37.5 L6 40.5Z" fill="#000"/></svg>
<div class="a" style="left:690px;top:202px;width:25px;height:82px;background:#f8f8f8;border-right:1px solid #c8c8c8;border-bottom:1px solid #c8c8c8"></div>
<svg style="left:695px;top:206px" width="17" height="17" viewBox="0 0 17 17"><path d="M1 12 L8 8 L16 11 L9 16Z" fill="#6ad06a" stroke="#1a6a1a" stroke-width="0.8"/><path d="M6 2 C10 2 11 4 11 9" stroke="#b01a1a" stroke-width="2" fill="none"/><path d="M8 8 L11 11 L14 7Z" fill="#b01a1a"/></svg>
<div class="t" style="left:681px;top:246px;width:46px;transform:rotate(-90deg);font-size:12px;color:#222;text-align:center">Insertion</div>
<div class="a" style="left:697px;top:286px;width:18px;height:78px;background:#efefef;border:1px solid #c4c4c4;border-left:1px solid #d4d4d4;border-radius:0 0 0 3px"></div>
<svg style="left:697px;top:290px" width="17" height="13" viewBox="0 0 17 13"><path d="M1 6 L6 1 L11 6 L15 2 L16 6 V12 H1Z" fill="#1aa0c0"/><rect x="2" y="6" width="9" height="6" fill="#1a2a9a"/><rect x="11" y="6" width="5" height="6" fill="#1aa0c0"/><rect x="12.5" y="8" width="2" height="4" fill="#000"/><rect x="4" y="8" width="2" height="2" fill="#fff"/></svg>
<div class="t" style="left:683px;top:325px;width:44px;transform:rotate(-90deg);font-size:12px;color:#9a9a9a;text-align:center">3D View</div>
<div class="a" style="left:697px;top:365px;width:18px;height:102px;background:#efefef;border:1px solid #c4c4c4;border-left:1px solid #d4d4d4;border-radius:0 0 0 3px"></div>
<svg style="left:697px;top:369px" width="17" height="17" viewBox="0 0 17 17"><path d="M1 1 H12 L7.5 6 V11 L5.5 9 V6Z" fill="#40c0c0" stroke="#000" stroke-width="0.8"/><rect x="8.5" y="7.5" width="7" height="9" fill="#fff" stroke="#000" stroke-width="0.8"/><path d="M10 10H14M10 12H14M10 14H14" stroke="#000" stroke-width="0.8"/></svg>
<div class="t" style="left:672px;top:418px;width:66px;transform:rotate(-90deg);font-size:11.5px;color:#9a9a9a;text-align:center">Display Filter</div>
<div class="a" style="left:697px;top:470px;width:18px;height:76px;background:#efefef;border:1px solid #c4c4c4;border-left:1px solid #d4d4d4;border-radius:0 0 0 3px"></div>
<svg style="left:697px;top:473px" width="17" height="17" viewBox="0 0 17 17"><circle cx="7" cy="7" r="6" fill="#2a70c8"/><path d="M3 5 C5 3 7 6 9 4 C10 7 6 9 4 9Z" fill="#3ab03a"/><rect x="8.5" y="7.5" width="7" height="9" fill="#fff" stroke="#000" stroke-width="0.8"/><path d="M10 10H14M10 12H14M10 14H14" stroke="#000" stroke-width="0.8"/></svg>
<div class="t" style="left:683px;top:509px;width:44px;transform:rotate(-90deg);font-size:12px;color:#9a9a9a;text-align:center">Internet</div>

<!--/RIGHT-->

<!--BOTTOM-->
<!-- BOTTOM TOOLBAR + STATUS -->
<div class="a" style="left:37px;top:758px;width:161px;height:1px;background:#fafafa"></div>
<div class="a" style="left:37px;top:766px;width:652px;height:1px;background:#a0a0a0"></div>
<div class="a" style="left:689px;top:767px;width:229px;height:1px;background:#a0a0a0"></div>
<div class="a" style="left:37px;top:767px;width:91px;height:34px;border-left:1px solid #fff;border-right:1px solid #a0a0a0"></div>
<svg style="left:44px;top:774px" width="19" height="18" viewBox="0 0 19 18"><path d="M2 5 L8 2 L14 5 L8 8Z" fill="#f8d800" stroke="#1a5ab8" stroke-width="0.8"/><path d="M2 5 V8 L8 11 L14 8 V5" fill="#ffe8a0" stroke="#1a5ab8" stroke-width="0.8"/><path d="M2 10 L8 7 L14 10 L8 13Z" fill="#60b0f0" stroke="#1a5ab8" stroke-width="0.8"/><path d="M2 10 V13 L8 16 L14 13 V10" fill="#2a80d0" stroke="#1a5ab8" stroke-width="0.8"/><path d="M16.5 2 V16 M15 3.5 L16.5 2 L18 3.5 M15 14.5 L16.5 16 L18 14.5" stroke="#1a3a90" fill="none"/></svg>
<svg style="left:69px;top:774px" width="19" height="18" viewBox="0 0 19 18"><path d="M1.5 6 V16 M16.5 6 V16 M1.5 11 H16.5" stroke="#1a5ab8" stroke-width="1.4"/><text x="3.5" y="8" font-size="7" font-weight="bold" fill="#1a5ab8" font-family="Liberation Sans">100</text></svg>
<div class="a" style="left:37px;top:801px;width:881px;height:1px;background:#a0a0a0"></div>
<div class="a" style="left:37px;top:802px;width:881px;height:1px;background:#fff"></div>
<div class="t" style="left:39px;top:807px;font-size:12px">Pick start point of stair</div>
<div class="a" style="left:800px;top:806px;width:28px;height:16px;border:1px solid;border-color:#a0a0a0 #fff #fff #a0a0a0"></div>
<div class="a" style="left:830px;top:806px;width:34px;height:16px;border:1px solid;border-color:#a0a0a0 #fff #fff #a0a0a0"></div>
<div class="t" style="left:832px;top:807px;font-size:12px">NUM</div>
<div class="a" style="left:866px;top:806px;width:32px;height:16px;border:1px solid;border-color:#a0a0a0 #fff #fff #a0a0a0"></div>
<svg style="left:905px;top:808px" width="13" height="13"><path d="M12 3 L3 12 M12 7 L7 12 M12 11 L11 12" stroke="#9a9a9a" stroke-width="1.2"/><path d="M12.5 4 L4 12.5 M12.5 8 L8 12.5" stroke="#fff" stroke-width="0.8"/></svg>
<!-- 3D view scrollbars & tabs -->
<div class="a" style="left:671px;top:144px;width:18px;height:602px;background:linear-gradient(90deg,#e8e8e8,#f4f4f4)"></div>
<svg style="left:675px;top:151px" width="10" height="6"><path d="M1 5 L5 1 L9 5Z" fill="#404040"/></svg>
<svg style="left:675px;top:734px" width="10" height="6"><path d="M1 1 L5 5 L9 1Z" fill="#404040"/></svg>
<div class="a" style="left:672px;top:437px;width:16px;height:48px;background:linear-gradient(90deg,#f2f2f2,#dedede);border:1px solid #9a9a9a;border-radius:2px"></div>
<svg style="left:676px;top:457px" width="8" height="7"><path d="M0 0.5H8M0 3H8M0 5.5H8" stroke="#444"/></svg>
<div class="a" style="left:225px;top:745px;width:464px;height:1px;background:#a0a0a0"></div>
<div class="a" style="left:225px;top:746px;width:464px;height:20px;background:#f0f0f0"></div>
<div class="a" style="left:229px;top:747px;width:39px;height:18px;background:linear-gradient(#e9e9e9,#dcdcdc);border:1px solid #c0c0c0;border-top:none;border-radius:0 0 3px 3px"></div>
<svg style="left:233px;top:750px" width="15" height="13"><path d="M1 1.5 H14 M1 11.5 H14 M1.5 1 V12 M13.5 1 V12 M1 6.5 H9 M7.5 1 V12 M10 1 V5 H14" stroke="#000" stroke-width="1.3" fill="none"/></svg>
<div class="t" style="left:250px;top:749px;font-size:12px;color:#8090a8;width:15px;overflow:hidden">Plan</div>
<div class="a" style="left:270px;top:746px;width:44px;height:20px;background:#f6f6f6;border-left:1px solid #d0d0d0;border-right:1px solid #404040;border-bottom:2px solid #1a1a1a;border-radius:0 0 3px 3px"></div>
<svg style="left:274px;top:750px" width="14" height="14" viewBox="0 0 14 14"><path d="M2 7 C1 4 5 3 6 6 C6.5 8 5 9 5.5 11 C6 13 3 14 2.5 12Z" fill="#000"/><path d="M8 5 C8 2 12 2 12.5 5 C13 7 11 8 11 10 C11 12 8 12 8.5 10Z" fill="#000"/><circle cx="2" cy="3.5" r="0.9" fill="#000"/><circle cx="4.5" cy="2.5" r="0.9" fill="#000"/><circle cx="9" cy="1.2" r="0.9" fill="#000"/><circle cx="11.5" cy="1" r="0.9" fill="#000"/></svg>
<div class="t" style="left:290px;top:749px;font-size:12px;color:#1a0a3a;width:20px;overflow:hidden;font-weight:bold;letter-spacing:-0.5px">Pers</div>
<div class="a" style="left:316px;top:747px;width:45px;height:18px;background:linear-gradient(#e9e9e9,#dcdcdc);border:1px solid #c0c0c0;border-top:none;border-radius:0 0 3px 3px"></div>
<svg style="left:320px;top:751px" width="16" height="11" viewBox="0 0 16 11"><circle cx="5" cy="7" r="3" fill="none" stroke="#000" stroke-width="1.4"/><circle cx="11.5" cy="7" r="3" fill="none" stroke="#000" stroke-width="1.4"/><path d="M1 1 L4 4 M6 1 L9 4 M8 7 H9" stroke="#000" stroke-width="1.4"/></svg>
<div class="t" style="left:337px;top:749px;font-size:12px;color:#7a8090;width:21px;overflow:hidden">Ortho</div>
<div class="a" style="left:368px;top:747px;width:1px;height:19px;background:#fff;border-left:1px solid #a0a0a0"></div>
<div class="a" style="left:371px;top:748px;width:298px;height:18px;background:repeating-linear-gradient(45deg,#f4f4f4 0 1px,#fbfbfb 1px 2px)"></div>
<div class="a" style="left:371px;top:748px;width:18px;height:18px;background:#f0f0f0;border:1px solid;border-color:#fff #606060 #606060 #fff"></div>
<svg style="left:377px;top:753px" width="5" height="9"><path d="M4.5 0 L0 4.5 L4.5 9Z" fill="#000"/></svg>
<div class="a" style="left:499px;top:748px;width:44px;height:18px;background:#f0f0f0;border:1px solid;border-color:#fff #606060 #606060 #fff"></div>
<div class="a" style="left:651px;top:748px;width:18px;height:18px;background:#f0f0f0;border:1px solid;border-color:#fff #606060 #606060 #fff"></div>
<svg style="left:658px;top:753px" width="5" height="9"><path d="M0 0 L4.5 4.5 L0 9Z" fill="#000"/></svg>
<svg style="left:676px;top:754px" width="14" height="14"><path d="M13 1 L1 13 M13 5 L5 13 M13 9 L9 13" stroke="#8a8a8a" stroke-width="1.1"/></svg>
<!-- right tab strip bottom gradient area already -->
<!-- tooltip -->
<div class="a" style="left:324px;top:147px;width:34px;height:19px;background:#ffffe1;border:1px solid #646464"></div>
<div class="t" style="left:327px;top:149px;font-size:12px">Walls</div>

<!--/BOTTOM-->

</body></html>
